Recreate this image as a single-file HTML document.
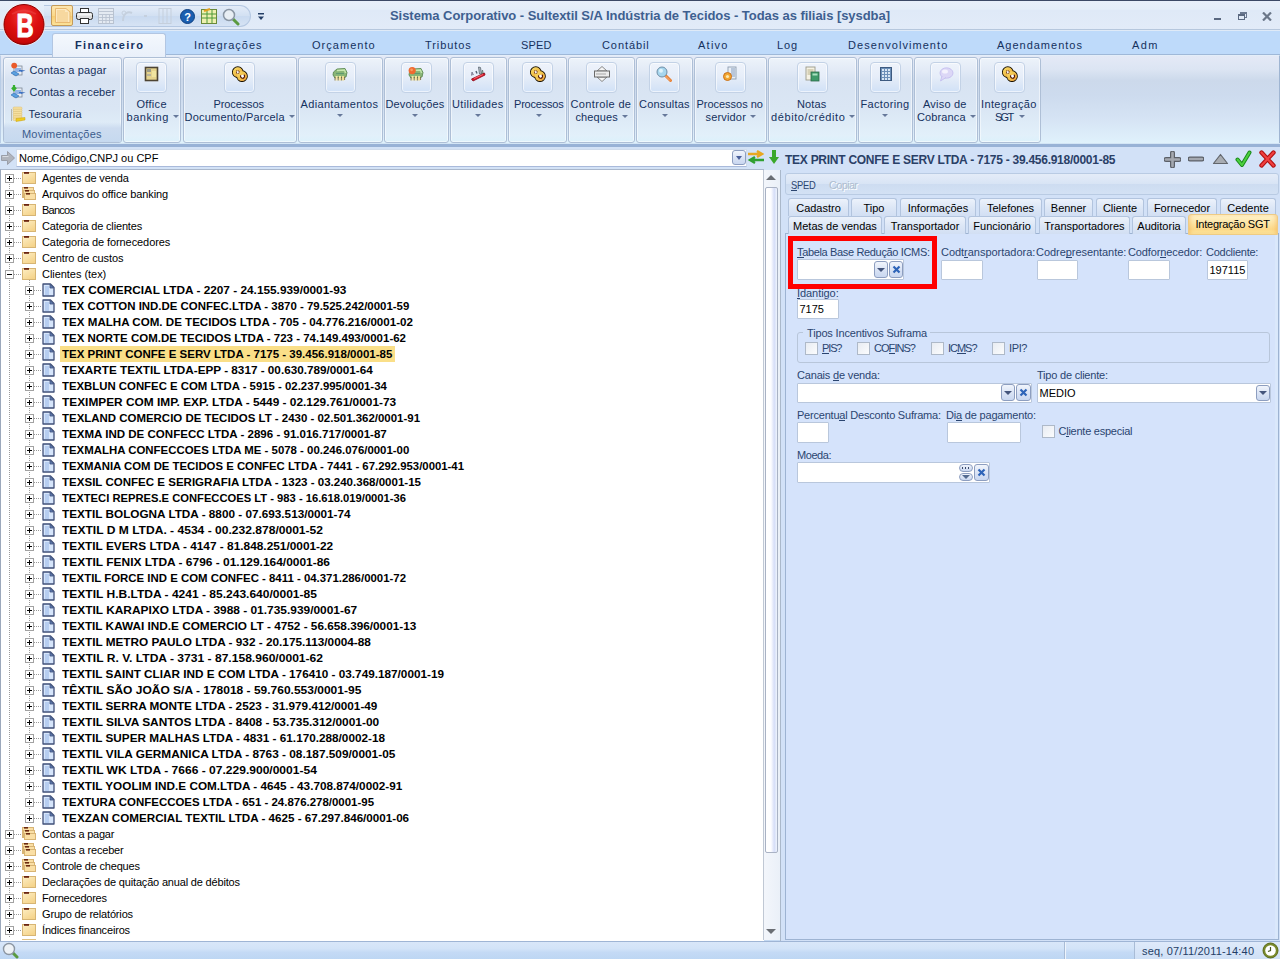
<!DOCTYPE html><html><head><meta charset="utf-8"><style>
*{box-sizing:border-box}
body{margin:0;width:1280px;height:959px;position:relative;overflow:hidden;font-family:"Liberation Sans",sans-serif;background:#c5daf3;font-size:11px;color:#000}
.a{position:absolute}
.t{position:absolute;white-space:nowrap;line-height:1}
.dv{position:absolute;width:1px;background-image:linear-gradient(#9a9a9a 50%,transparent 50%);background-size:1px 2px}
.dh{position:absolute;height:1px;background-image:linear-gradient(90deg,#9a9a9a 50%,transparent 50%);background-size:2px 1px}
.grp{position:absolute;top:57px;height:86px;border:1px solid #aebfd6;border-radius:3px;background:linear-gradient(#edf3fa 0%,#e2eaf6 15%,#d8e3f2 25%,#dae6f4 60%,#e2f0fa 92%,#dcf1fb 100%);box-shadow:inset 0 0 0 1px rgba(255,255,255,.5)}
.ib{position:absolute;top:62px;width:31px;height:31px;border:1px solid #c3d2e6;border-radius:4px;background:linear-gradient(#eef3fb 0%,#e7eef9 45%,#dde8f7 70%,#d0e1f7 100%);box-shadow:inset 0 0 0 1px rgba(255,255,255,.6)}
.rl{position:absolute;white-space:nowrap;line-height:1;color:#15315e;font-size:11px}
.arr{position:absolute;width:0;height:0;border-left:3px solid transparent;border-right:3px solid transparent;border-top:3px solid #66789a}
.lbl{position:absolute;white-space:nowrap;line-height:1;color:#2b4570;font-size:11px}
.inp{position:absolute;background:#fff;border:1px solid #b9c7dc;border-radius:1px}
.btn{position:absolute;border:1px solid #8d9ec0;border-radius:3px;background:linear-gradient(#f1f5fc,#dbe4f5 50%,#c9d7f0)}
.tab{position:absolute;height:18px;border:1px solid #b2c4de;border-bottom:none;border-radius:3px 3px 0 0;background:linear-gradient(#ecf2fb,#dde7f6 50%,#d2dff3)}
.cb{position:absolute;width:13px;height:13px;border:1px solid #aeb9c8;background:linear-gradient(135deg,#e8ecf2,#fbfcfd)}
</style></head><body>
<div class="a" style="left:0;top:0;width:1280px;height:30px;background:linear-gradient(#e8f0fa 0%,#e4eef9 30%,#dfe9f7 32%,#e2ebf8 100%);border-top:1px solid #3c4a66;border-bottom:1px solid #b6c7dd"></div>
<div class="t" style="left:390px;top:9px;font-weight:bold;font-size:13px;color:#3e5f90;letter-spacing:-0.048px">Sistema Corporativo - Sultextil S/A Indústria de Tecidos - Todas as filiais [sysdba]</div>
<div class="a" style="left:1214px;top:18px;width:7px;height:2px;background:#5a6880"></div>
<div class="a" style="left:1240px;top:12px;width:7px;height:6px;border:1px solid #6a7890;border-top-width:2px"></div>
<div class="a" style="left:1238px;top:14px;width:7px;height:6px;border:1px solid #5a6880;border-top-width:2px;background:#e0eaf7"></div>
<svg class="a" style="left:1262px;top:12px" width="10" height="9" viewBox="0 0 10 9"><path d="M1 0.5 L9 8.5 M9 0.5 L1 8.5" stroke="#6a7688" stroke-width="2.2"/></svg>
<div class="a" style="left:0;top:30px;width:1280px;height:25px;background:#bedafa;border-top:1px solid #dfeaf7;border-bottom:1px solid #9fb8d8"></div>
<div class="a" style="left:0;top:55px;width:1280px;height:89px;background:linear-gradient(#e4e9f6 0%,#dce5f3 15%,#ccd9eb 28%,#cddbee 45%,#d5e3f4 70%,#dcecf9 88%,#e0f2fc 100%);border-top:1px solid #e4eef9;border-left:1px solid #b9cde6;border-right:1px solid #9fb5d2"></div>
<div class="a" style="left:52px;top:33px;width:114px;height:24px;border:1px solid #b2c6e2;border-bottom:none;border-radius:3px 3px 0 0;background:linear-gradient(#f4f8fd,#e9f0fa)"></div>
<div class="t" style="left:75px;top:40px;font-weight:bold;font-size:11px;color:#15315e;letter-spacing:1.375px">Financeiro</div>
<div class="t" style="left:194px;top:40px;font-size:11px;color:#15315e;letter-spacing:1.012px">Integrações</div>
<div class="t" style="left:312px;top:40px;font-size:11px;color:#15315e;letter-spacing:1.035px">Orçamento</div>
<div class="t" style="left:425px;top:40px;font-size:11px;color:#15315e;letter-spacing:0.925px">Tributos</div>
<div class="t" style="left:521px;top:40px;font-size:11px;color:#15315e;letter-spacing:0.177px">SPED</div>
<div class="t" style="left:602px;top:40px;font-size:11px;color:#15315e;letter-spacing:0.913px">Contábil</div>
<div class="t" style="left:698px;top:40px;font-size:11px;color:#15315e;letter-spacing:1.245px">Ativo</div>
<div class="t" style="left:777px;top:40px;font-size:11px;color:#15315e;letter-spacing:0.820px">Log</div>
<div class="t" style="left:848px;top:40px;font-size:11px;color:#15315e;letter-spacing:1.066px">Desenvolvimento</div>
<div class="t" style="left:997px;top:40px;font-size:11px;color:#15315e;letter-spacing:0.991px">Agendamentos</div>
<div class="t" style="left:1132px;top:40px;font-size:11px;color:#15315e;letter-spacing:1.438px">Adm</div>
<div class="grp" style="left:3px;width:119px"></div>
<div class="a" style="left:4px;top:122px;width:117px;height:20px;background:linear-gradient(rgba(205,221,241,0) 0%,#cddcf0 30%,#c6d9ef 100%);border-radius:0 0 2px 2px"></div>
<svg class="a" style="left:10px;top:62px" width="16" height="16" viewBox="0 0 16 16"><rect x="4" y="4" width="8" height="9" fill="#e8edf4" stroke="#7d8896" stroke-width="0.8"/><path d="M5 7h6M5 9h6" stroke="#3f7fd8" stroke-width="1.2"/><path d="M1 11 L6 14 L9 12 L4 9 Z" fill="#5aa0e0" stroke="#2d6ab0" stroke-width="0.6"/><path d="M11 8 L15.5 8.5 L11 10" fill="#3a6fc0"/><rect x="9" y="8" width="3" height="1.2" fill="#3a6fc0"/><circle cx="4.2" cy="3.6" r="2.9" fill="#ea5a2a"/></svg>
<svg class="a" style="left:10px;top:84px" width="16" height="16" viewBox="0 0 16 16"><rect x="4" y="4" width="8" height="9" fill="#e8edf4" stroke="#7d8896" stroke-width="0.8"/><path d="M5 7h6M5 9h6" stroke="#3f7fd8" stroke-width="1.2"/><path d="M1 11 L6 14 L9 12 L4 9 Z" fill="#5aa0e0" stroke="#2d6ab0" stroke-width="0.6"/><path d="M11 8 L15.5 8.5 L11 10" fill="#3a6fc0"/><rect x="9" y="8" width="3" height="1.2" fill="#3a6fc0"/><path d="M4 1 V5 M2 3.5 L4 6 L6 3.5" stroke="#36b030" stroke-width="2.2" fill="none"/></svg>
<svg class="a" style="left:10px;top:106px" width="16" height="16" viewBox="0 0 16 16"><path d="M1.5 3 V15" stroke="#8a8060" stroke-width="0.8" opacity="0.6"/><rect x="3" y="1.0" width="9" height="2.6" rx="1.2" fill="#f7e0a0" stroke="#d9bd70" stroke-width="0.5"/><rect x="3" y="3.2" width="9" height="2.6" rx="1.2" fill="#f7e0a0" stroke="#d9bd70" stroke-width="0.5"/><rect x="3" y="5.4" width="9" height="2.6" rx="1.2" fill="#f7e0a0" stroke="#d9bd70" stroke-width="0.5"/><rect x="3" y="7.6000000000000005" width="9" height="2.6" rx="1.2" fill="#f7e0a0" stroke="#d9bd70" stroke-width="0.5"/><rect x="3" y="9.8" width="9" height="2.6" rx="1.2" fill="#f7e0a0" stroke="#d9bd70" stroke-width="0.5"/><rect x="3" y="12.0" width="9" height="2.6" rx="1.2" fill="#f7e0a0" stroke="#d9bd70" stroke-width="0.5"/><path d="M6 12.5 L15 11.5 L15 14 L6 15.5 Z" fill="#f0cc20" stroke="#c8a010" stroke-width="0.5"/></svg>
<div class="t" style="left:29.5px;top:65px;font-size:11px;color:#15315e;letter-spacing:0.137px">Contas a pagar</div>
<div class="t" style="left:29.5px;top:87px;font-size:11px;color:#15315e;letter-spacing:0.087px">Contas a receber</div>
<div class="t" style="left:28.5px;top:109px;font-size:11px;color:#15315e;letter-spacing:0.182px">Tesouraria</div>
<div class="t" style="left:22px;top:129px;font-size:11px;color:#3b5b8c;letter-spacing:0.204px">Movimentações</div>
<div class="grp" style="left:123px;width:58px"></div>
<div class="ib" style="left:136px"></div>
<svg class="a" style="left:144px;top:66px" width="16" height="16" viewBox="0 0 16 16"><rect x="1.5" y="1.5" width="12" height="13" fill="#e5d38d" stroke="#4d4434" stroke-width="1.6"/><rect x="3" y="3" width="4" height="3" fill="#9a9a88"/><rect x="3" y="8" width="4" height="2" fill="#b9b39a"/><rect x="8" y="5" width="4" height="6" fill="#f0e4a0"/></svg>
<div class="t" style="left:136.5px;top:99px;font-size:11px;color:#15315e;letter-spacing:0.294px">Office</div>
<div class="t" style="left:126.5px;top:112px;font-size:11px;color:#15315e;letter-spacing:0.542px">banking</div>
<div class="arr" style="left:172.8px;top:115px"></div>
<div class="grp" style="left:183px;width:114px"></div>
<div class="ib" style="left:224px"></div>
<svg class="a" style="left:232px;top:66px" width="16" height="16" viewBox="0 0 16 16"><defs><linearGradient id="gg" x1="0" y1="0" x2="1" y2="1"><stop offset="0" stop-color="#f8e070"/><stop offset="0.5" stop-color="#f2c048"/><stop offset="1" stop-color="#ee9a3a"/></linearGradient></defs><g stroke="#1a1200" stroke-width="1.5"><circle cx="5.8" cy="6.2" r="5.1" fill="none"/><circle cx="10" cy="10.2" r="5.1" fill="none"/></g><circle cx="5.8" cy="6.2" r="4.9" fill="url(#gg)"/><circle cx="10" cy="10.2" r="4.9" fill="url(#gg)"/><rect x="4.5" y="4.8" width="2.6" height="2.6" fill="#fff" stroke="#5a1a00" stroke-width="0.9" stroke-dasharray="0.8 0.6"/><path d="M8.8 9.2 a2 2 0 1 0 3 -0.6" fill="#fff" stroke="#4a1000" stroke-width="1.1"/></svg>
<div class="t" style="left:213.5px;top:99px;font-size:11px;color:#15315e;letter-spacing:-0.107px">Processos</div>
<div class="t" style="left:184.5px;top:112px;font-size:11px;color:#15315e;letter-spacing:0.212px">Documento/Parcela</div>
<div class="arr" style="left:289.0px;top:115px"></div>
<div class="grp" style="left:298px;width:85px"></div>
<div class="ib" style="left:325px"></div>
<svg class="a" style="left:332px;top:66px" width="16" height="16" viewBox="0 0 16 16"><path d="M1.5 6 L5 3 L13 2.5 L15 6.5 L14 11 L3 12 L1 9 Z" fill="#8ab677" stroke="#5d8a55" stroke-width="0.9" stroke-linejoin="round"/><path d="M5 4.5 L12.5 4 L13.5 7" fill="none" stroke="#c8e8b0" stroke-width="1.3"/><path d="M4 7.5 h8" stroke="#5f9a70" stroke-width="1.2"/><rect x="3.5" y="10" width="2.2" height="4.5" fill="#f4e6a8"/><rect x="6.8" y="10" width="2.2" height="4.5" fill="#f8e8a0"/><rect x="10" y="10" width="2.2" height="4.5" fill="#eedc98"/><path d="M3 11 v3.5 M6.2 11 v3.5 M9.4 11 v3.5 M12.6 11 v3" stroke="#6a5a30" stroke-width="0.8"/></svg>
<div class="t" style="left:300.5px;top:99px;font-size:11px;color:#15315e;letter-spacing:0.342px">Adiantamentos</div>
<div class="arr" style="left:336.8px;top:114px"></div>
<div class="grp" style="left:384px;width:65px"></div>
<div class="ib" style="left:401px"></div>
<svg class="a" style="left:408px;top:66px" width="16" height="16" viewBox="0 0 16 16"><path d="M1.5 6 L5 3 L13 2.5 L15 6.5 L14 11 L3 12 L1 9 Z" fill="#8ab677" stroke="#5d8a55" stroke-width="0.9" stroke-linejoin="round"/><path d="M5 4.5 L12.5 4 L13.5 7" fill="none" stroke="#c8e8b0" stroke-width="1.3"/><path d="M4 7.5 h8" stroke="#5f9a70" stroke-width="1.2"/><rect x="3.5" y="10" width="2.2" height="4.5" fill="#f4e6a8"/><rect x="6.8" y="10" width="2.2" height="4.5" fill="#f8e8a0"/><rect x="10" y="10" width="2.2" height="4.5" fill="#eedc98"/><path d="M3 11 v3.5 M6.2 11 v3.5 M9.4 11 v3.5 M12.6 11 v3" stroke="#6a5a30" stroke-width="0.8"/><circle cx="4.2" cy="4.6" r="3.6" fill="#f06a30"/><circle cx="3.6" cy="3.8" r="1.4" fill="#f89a60"/></svg>
<div class="t" style="left:385.5px;top:99px;font-size:11px;color:#15315e;letter-spacing:0.141px">Devoluções</div>
<div class="arr" style="left:412.4px;top:114px"></div>
<div class="grp" style="left:450px;width:57px"></div>
<div class="ib" style="left:463px"></div>
<svg class="a" style="left:470px;top:66px" width="16" height="16" viewBox="0 0 16 16"><path d="M9.5 8 L8.5 1 L10.5 1.5 L11.5 8 Z" fill="#b8c0c8" stroke="#58646e" stroke-width="0.8"/><path d="M11.5 8 L12.5 4 L13.5 8 Z" fill="#9fb8a8" stroke="#58706a" stroke-width="0.7"/><path d="M1.5 9.5 L2 6 L3.5 9" fill="#a8a8b8" stroke="#707088" stroke-width="0.8"/><path d="M7 7.5 L6 5" stroke="#506070" stroke-width="1.4"/><path d="M1.5 13 L14.5 7 L15 9 L3 15 Z" fill="#e01828" stroke="#8a0818" stroke-width="0.8" stroke-linejoin="round"/><path d="M4 12.5 L13 8.5" stroke="#ff7a80" stroke-width="0.8"/></svg>
<div class="t" style="left:452.0px;top:99px;font-size:11px;color:#15315e;letter-spacing:0.326px">Utilidades</div>
<div class="arr" style="left:474.9px;top:114px"></div>
<div class="grp" style="left:508px;width:59px"></div>
<div class="ib" style="left:522px"></div>
<svg class="a" style="left:530px;top:66px" width="16" height="16" viewBox="0 0 16 16"><defs><linearGradient id="gg" x1="0" y1="0" x2="1" y2="1"><stop offset="0" stop-color="#f8e070"/><stop offset="0.5" stop-color="#f2c048"/><stop offset="1" stop-color="#ee9a3a"/></linearGradient></defs><g stroke="#1a1200" stroke-width="1.5"><circle cx="5.8" cy="6.2" r="5.1" fill="none"/><circle cx="10" cy="10.2" r="5.1" fill="none"/></g><circle cx="5.8" cy="6.2" r="4.9" fill="url(#gg)"/><circle cx="10" cy="10.2" r="4.9" fill="url(#gg)"/><rect x="4.5" y="4.8" width="2.6" height="2.6" fill="#fff" stroke="#5a1a00" stroke-width="0.9" stroke-dasharray="0.8 0.6"/><path d="M8.8 9.2 a2 2 0 1 0 3 -0.6" fill="#fff" stroke="#4a1000" stroke-width="1.1"/></svg>
<div class="t" style="left:514.0px;top:99px;font-size:11px;color:#15315e;letter-spacing:-0.201px">Processos</div>
<div class="arr" style="left:536.1px;top:114px"></div>
<div class="grp" style="left:568px;width:67px"></div>
<div class="ib" style="left:586px"></div>
<svg class="a" style="left:594px;top:66px" width="16" height="16" viewBox="0 0 16 16"><path d="M8 0.5 L13 5 H3 Z" fill="#f4f4f4" stroke="#7c7c7c" stroke-width="0.9"/><path d="M8 15.5 L13 11 H3 Z" fill="#f4f4f4" stroke="#7c7c7c" stroke-width="0.9"/><rect x="0.5" y="5" width="15" height="6" fill="#ececec" stroke="#6a6a6a" stroke-width="1"/><path d="M2 8h10" stroke="#a8a8a8" stroke-width="1"/></svg>
<div class="t" style="left:570.5px;top:99px;font-size:11px;color:#15315e;letter-spacing:0.362px">Controle de</div>
<div class="t" style="left:575.5px;top:112px;font-size:11px;color:#15315e;letter-spacing:0.109px">cheques</div>
<div class="arr" style="left:622.0px;top:115px"></div>
<div class="grp" style="left:636px;width:57px"></div>
<div class="ib" style="left:649px"></div>
<svg class="a" style="left:656px;top:66px" width="16" height="16" viewBox="0 0 16 16"><path d="M9 9 L14.5 14.5" stroke="#e8843a" stroke-width="3" stroke-linecap="round"/><path d="M9.5 10 L14 14.5" stroke="#f7b27a" stroke-width="1"/><circle cx="6" cy="6" r="5" fill="#a7d6ee" stroke="#6f8ea6" stroke-width="1"/><circle cx="5" cy="4.8" r="2" fill="#dff3fb"/></svg>
<div class="t" style="left:639.0px;top:99px;font-size:11px;color:#15315e;letter-spacing:0.197px">Consultas</div>
<div class="arr" style="left:661.5px;top:114px"></div>
<div class="grp" style="left:694px;width:73px"></div>
<div class="ib" style="left:715px"></div>
<svg class="a" style="left:722px;top:66px" width="16" height="16" viewBox="0 0 16 16"><rect x="6" y="1" width="8" height="12" fill="#e8eef6" stroke="#8e9db0" stroke-width="0.9"/><rect x="9" y="2" width="4" height="9" fill="#b8c6da"/><circle cx="5.5" cy="10.5" r="4" fill="#f2a630" stroke="#c9701a" stroke-width="1"/><circle cx="5.5" cy="10.5" r="1.6" fill="#fde9b0"/></svg>
<div class="t" style="left:696.5px;top:99px;font-size:11px;color:#15315e;letter-spacing:-0.023px">Processos no</div>
<div class="t" style="left:705.5px;top:112px;font-size:11px;color:#15315e;letter-spacing:0.168px">servidor</div>
<div class="arr" style="left:750.4px;top:115px"></div>
<div class="grp" style="left:768px;width:89px"></div>
<div class="ib" style="left:797px"></div>
<svg class="a" style="left:804px;top:66px" width="16" height="16" viewBox="0 0 16 16"><rect x="2" y="1" width="9" height="13" fill="#f6f2e4" stroke="#9a9a8a" stroke-width="0.9"/><path d="M3.5 4h6M3.5 6h6M3.5 8h4" stroke="#b0a880" stroke-width="0.9"/><rect x="7" y="6" width="8" height="9" fill="#3f9a6a" stroke="#2f6a4a" stroke-width="0.8"/><rect x="8.5" y="7.5" width="5" height="2" fill="#a9e0c0"/></svg>
<div class="t" style="left:797.0px;top:99px;font-size:11px;color:#15315e;letter-spacing:0.113px">Notas</div>
<div class="t" style="left:771.0px;top:112px;font-size:11px;color:#15315e;letter-spacing:0.604px">débito/crédito</div>
<div class="arr" style="left:849.3px;top:115px"></div>
<div class="grp" style="left:858px;width:55px"></div>
<div class="ib" style="left:870px"></div>
<svg class="a" style="left:878px;top:66px" width="16" height="16" viewBox="0 0 16 16"><rect x="2.5" y="1.5" width="11" height="13" fill="#6c8fb8" stroke="#3d5a80" stroke-width="1"/><rect x="4" y="3" width="2" height="2" fill="#d8e6f4"/><rect x="7" y="3" width="2" height="2" fill="#d8e6f4"/><rect x="10" y="3" width="2" height="2" fill="#d8e6f4"/><rect x="4" y="6" width="2" height="2" fill="#d8e6f4"/><rect x="7" y="6" width="2" height="2" fill="#d8e6f4"/><rect x="10" y="6" width="2" height="2" fill="#d8e6f4"/><rect x="4" y="9" width="2" height="2" fill="#d8e6f4"/><rect x="7" y="9" width="2" height="2" fill="#d8e6f4"/><rect x="10" y="9" width="2" height="2" fill="#d8e6f4"/><rect x="4" y="12" width="2" height="2" fill="#d8e6f4"/><rect x="7" y="12" width="2" height="2" fill="#d8e6f4"/><rect x="10" y="12" width="2" height="2" fill="#d8e6f4"/></svg>
<div class="t" style="left:860.5px;top:99px;font-size:11px;color:#15315e;letter-spacing:0.343px">Factoring</div>
<div class="arr" style="left:882.2px;top:114px"></div>
<div class="grp" style="left:914px;width:64px"></div>
<div class="ib" style="left:930px"></div>
<svg class="a" style="left:938px;top:66px" width="16" height="16" viewBox="0 0 16 16"><ellipse cx="8.5" cy="7" rx="6.5" ry="5.2" fill="#dcd7f6" stroke="#c2bbee" stroke-width="0.8"/><path d="M4 10 L2.5 15 L8 11.5" fill="#dcd7f6" stroke="#c2bbee" stroke-width="0.8"/><ellipse cx="7" cy="5.5" rx="3" ry="2" fill="#f4f2fd"/></svg>
<div class="t" style="left:923.0px;top:99px;font-size:11px;color:#15315e;letter-spacing:0.214px">Aviso de</div>
<div class="t" style="left:917.0px;top:112px;font-size:11px;color:#15315e;letter-spacing:0.128px">Cobranca</div>
<div class="arr" style="left:970.1px;top:115px"></div>
<div class="grp" style="left:979px;width:62px"></div>
<div class="ib" style="left:994px"></div>
<svg class="a" style="left:1002px;top:66px" width="16" height="16" viewBox="0 0 16 16"><defs><linearGradient id="gg" x1="0" y1="0" x2="1" y2="1"><stop offset="0" stop-color="#f8e070"/><stop offset="0.5" stop-color="#f2c048"/><stop offset="1" stop-color="#ee9a3a"/></linearGradient></defs><g stroke="#1a1200" stroke-width="1.5"><circle cx="5.8" cy="6.2" r="5.1" fill="none"/><circle cx="10" cy="10.2" r="5.1" fill="none"/></g><circle cx="5.8" cy="6.2" r="4.9" fill="url(#gg)"/><circle cx="10" cy="10.2" r="4.9" fill="url(#gg)"/><rect x="4.5" y="4.8" width="2.6" height="2.6" fill="#fff" stroke="#5a1a00" stroke-width="0.9" stroke-dasharray="0.8 0.6"/><path d="M8.8 9.2 a2 2 0 1 0 3 -0.6" fill="#fff" stroke="#4a1000" stroke-width="1.1"/></svg>
<div class="t" style="left:981.0px;top:99px;font-size:11px;color:#15315e;letter-spacing:0.380px">Integração</div>
<div class="t" style="left:995.0px;top:112px;font-size:11px;color:#15315e;letter-spacing:-1.712px">SGT</div>
<div class="arr" style="left:1018.5px;top:115px"></div>
<div class="a" style="left:44px;top:5px;width:207px;height:22px;border:1px solid #b5c8e2;border-left:none;border-radius:0 11px 11px 0;background:linear-gradient(#e3ecf8,#d2e0f2 50%,#c9daf0 51%,#d6e3f4)"></div>
<div class="a" style="left:51px;top:5px;width:22px;height:21px;border:1px solid #c49a58;border-radius:2px;background:linear-gradient(#fde6b0,#fbd98a 50%,#f9cd70 51%,#fbe29a)"></div>
<svg class="a" style="left:55px;top:8px" width="16" height="15"><path d="M0.5 0.5 H11 L15 4 V14.5 H0.5 Z" fill="#fce8c0" stroke="#e8b870" stroke-width="1"/><path d="M2 3h8M2 5h11M2 7h11M2 9h11M2 11h11M2 13h11" stroke="#f0c070" stroke-width="0.8"/></svg>
<svg class="a" style="left:76px;top:8px" width="17" height="16"><rect x="4.5" y="0.5" width="8" height="5" fill="#fff" stroke="#333" stroke-width="1"/><rect x="0.5" y="4.5" width="16" height="7" rx="2" fill="#dcdcdc" stroke="#2f2f2f" stroke-width="1"/><rect x="1.5" y="5.5" width="14" height="2" fill="#f4f4f4"/><rect x="4.5" y="10.5" width="8" height="5" fill="#fff" stroke="#333" stroke-width="1"/></svg>
<svg class="a" style="left:98px;top:8px" width="16" height="16"><rect x="0.5" y="0.5" width="15" height="15" fill="#e4eaf2" stroke="#b8c2d0"/><path d="M1 3.5h14M1 6.5h14M4.5 7v8M8 7v8M11.5 7v8M1 9.5h14M1 12.5h14" stroke="#b8c2d0" stroke-width="0.9"/></svg>
<svg class="a" style="left:120px;top:9px" width="32" height="14"><path d="M3 12 C3 4 8 2 12 4" stroke="#c5d0de" stroke-width="2" fill="none"/><circle cx="4" cy="4" r="2" fill="none" stroke="#c5d0de"/><path d="M24 7h3" stroke="#c5d0de" stroke-width="2"/></svg>
<svg class="a" style="left:158px;top:8px" width="14" height="16"><rect x="1" y="0.5" width="12" height="15" fill="none" stroke="#c5cfdc"/><path d="M5 1v14M9 1v14" stroke="#c5cfdc"/></svg>
<svg class="a" style="left:180px;top:9px" width="15" height="15"><circle cx="7.5" cy="7.5" r="7" fill="#1a5eb0" stroke="#0e3f80"/><text x="7.5" y="11.5" text-anchor="middle" font-family="Liberation Sans" font-weight="bold" font-size="11" fill="#fff">?</text></svg>
<svg class="a" style="left:201px;top:8px" width="16" height="16"><rect x="0.5" y="1.5" width="15" height="14" fill="#eef0b0" stroke="#6a8a3a"/><path d="M1 6h14M1 10h14M6 2v13M11 2v13" stroke="#4c9a3a"/><path d="M3 3 L9 1" stroke="#e0a020" stroke-width="2"/></svg>
<svg class="a" style="left:222px;top:8px" width="18" height="18"><path d="M10 10 L16 16" stroke="#5a9a40" stroke-width="3" stroke-linecap="round"/><circle cx="7" cy="7" r="5.5" fill="#e8eef4" stroke="#8a96a4" stroke-width="1.5"/></svg>
<svg class="a" style="left:258px;top:13px" width="7" height="8"><rect x="0" y="0" width="6" height="1.5" fill="#243e66"/><path d="M0 3.5 H6 L3 7 Z" fill="#243e66"/></svg>
<svg class="a" style="left:2px;top:2px" width="45" height="45" viewBox="0 0 45 45"><defs><radialGradient id="lg" cx="0.5" cy="0.3" r="0.75"><stop offset="0" stop-color="#f03838"/><stop offset="0.5" stop-color="#dc1010"/><stop offset="0.85" stop-color="#c80808"/><stop offset="1" stop-color="#a00000"/></radialGradient></defs><circle cx="22" cy="22.5" r="21.3" fill="#fbeaea" opacity="0.7"/><circle cx="22" cy="22.5" r="20" fill="url(#lg)" stroke="#8a0000" stroke-width="1"/><path d="M10 12 Q22 5 34 12" stroke="#f87070" stroke-width="2" fill="none" opacity="0.25"/><text x="0" y="0" transform="translate(23,34.8) scale(0.72,1)" text-anchor="middle" font-family="Liberation Sans" font-weight="bold" font-size="33" fill="#fff" stroke="#fff" stroke-width="1.1">B</text></svg>
<div class="a" style="left:0;top:143px;width:1280px;height:1px;background:#d3e5f5"></div>
<div class="a" style="left:0;top:144px;width:1280px;height:3px;background:#98b2d6"></div>
<div class="a" style="left:0;top:147px;width:784px;height:23px;background:#d3e2f6"></div>
<svg class="a" style="left:1px;top:151px" width="14" height="14"><path d="M0.5 4.5 H6.5 V0.5 L13.5 7 L6.5 13.5 V9.5 H0.5 Z" fill="#b0b4bc" stroke="#9a9ea8"/><path d="M1.5 5.5 H7.5" stroke="#d8dce2"/></svg>
<div class="a" style="left:16px;top:149px;width:731px;height:18px;background:#fff;border:1px solid #d0dcec;border-bottom-color:#a9badb"></div>
<div class="t" style="left:19px;top:153px;font-size:11px">Nome,Código,CNPJ ou CPF</div>
<div class="btn" style="left:732px;top:150px;width:14px;height:15px"></div>
<div class="arr" style="left:736px;top:156px;border-top-color:#4a5f9a;border-left-width:3.5px;border-right-width:3.5px;border-top-width:4px"></div>
<svg class="a" style="left:747px;top:149px" width="18" height="16"><path d="M1 5 H13 M10 2 L15 5 L10 8" stroke="#e8a820" stroke-width="2.4" fill="none"/><path d="M17 11 H5 M8 8 L3 11 L8 14" stroke="#30a030" stroke-width="2.4" fill="none"/></svg>
<svg class="a" style="left:768px;top:149px" width="12" height="17"><path d="M6 1 V10" stroke="#3aa82a" stroke-width="4"/><path d="M1 8 L6 15 L11 8 Z" fill="#3aa82a"/></svg>
<div class="a" style="left:0;top:169px;width:764px;height:772px;background:#fff;border-left:1px solid #9ba8bb;border-top:1px solid #aab8cc"></div>
<div class="dv" style="left:9px;top:182px;height:756px"></div>
<div class="a" style="left:22px;top:939px;width:14px;height:1px;background:#e0c080"></div>
<div class="dv" style="left:29px;top:280px;height:534px"></div>
<div class="dh" style="left:14px;top:178px;width:7px"></div>
<svg class="a" style="left:5px;top:174px" width="9" height="9" viewBox="0 0 9 9"><rect x="0.5" y="0.5" width="8" height="8" fill="#fff" stroke="#a2a2a2"/><rect x="2" y="4" width="5" height="1" fill="#000"/><rect x="4" y="2" width="1" height="5" fill="#000"/></svg>
<svg class="a" style="left:22px;top:171px" width="14" height="13" viewBox="0 0 14 13"><defs><linearGradient id="fg" x1="0" y1="0" x2="0.6" y2="1"><stop offset="0" stop-color="#fdeec4"/><stop offset="1" stop-color="#f5d48c"/></linearGradient></defs><rect x="0.5" y="1.5" width="13" height="11" fill="url(#fg)" stroke="#d7b574"/><rect x="2" y="1" width="5" height="1.8" fill="#6a2410"/></svg>
<div class="t" style="left:42px;top:173px;font-size:11px;letter-spacing:-0.129px">Agentes de venda</div>
<div class="dh" style="left:14px;top:194px;width:7px"></div>
<svg class="a" style="left:5px;top:190px" width="9" height="9" viewBox="0 0 9 9"><rect x="0.5" y="0.5" width="8" height="8" fill="#fff" stroke="#a2a2a2"/><rect x="2" y="4" width="5" height="1" fill="#000"/><rect x="4" y="2" width="1" height="5" fill="#000"/></svg>
<svg class="a" style="left:22px;top:186px" width="14" height="14" viewBox="0 0 14 14"><rect x="0.5" y="1.5" width="11" height="10" fill="#fadfa5" stroke="#d8b474" stroke-width="1"/><rect x="2" y="1" width="4" height="1.6" fill="#6a2810"/><rect x="1.5" y="4.5" width="11" height="7" fill="#fadfa5" stroke="#d8b474" stroke-width="1"/><rect x="3" y="4" width="4" height="1.6" fill="#6a2810"/><rect x="2.5" y="7.5" width="11" height="6" fill="#fadfa5" stroke="#d8b474" stroke-width="1"/><rect x="4" y="7" width="4" height="1.6" fill="#6a2810"/></svg>
<div class="t" style="left:42px;top:189px;font-size:11px;letter-spacing:-0.109px">Arquivos do office banking</div>
<div class="dh" style="left:14px;top:210px;width:7px"></div>
<svg class="a" style="left:5px;top:206px" width="9" height="9" viewBox="0 0 9 9"><rect x="0.5" y="0.5" width="8" height="8" fill="#fff" stroke="#a2a2a2"/><rect x="2" y="4" width="5" height="1" fill="#000"/><rect x="4" y="2" width="1" height="5" fill="#000"/></svg>
<svg class="a" style="left:22px;top:203px" width="14" height="13" viewBox="0 0 14 13"><defs><linearGradient id="fg" x1="0" y1="0" x2="0.6" y2="1"><stop offset="0" stop-color="#fdeec4"/><stop offset="1" stop-color="#f5d48c"/></linearGradient></defs><rect x="0.5" y="1.5" width="13" height="11" fill="url(#fg)" stroke="#d7b574"/><rect x="2" y="1" width="5" height="1.8" fill="#6a2410"/></svg>
<div class="t" style="left:42px;top:205px;font-size:11px;letter-spacing:-0.741px">Bancos</div>
<div class="dh" style="left:14px;top:226px;width:7px"></div>
<svg class="a" style="left:5px;top:222px" width="9" height="9" viewBox="0 0 9 9"><rect x="0.5" y="0.5" width="8" height="8" fill="#fff" stroke="#a2a2a2"/><rect x="2" y="4" width="5" height="1" fill="#000"/><rect x="4" y="2" width="1" height="5" fill="#000"/></svg>
<svg class="a" style="left:22px;top:219px" width="14" height="13" viewBox="0 0 14 13"><defs><linearGradient id="fg" x1="0" y1="0" x2="0.6" y2="1"><stop offset="0" stop-color="#fdeec4"/><stop offset="1" stop-color="#f5d48c"/></linearGradient></defs><rect x="0.5" y="1.5" width="13" height="11" fill="url(#fg)" stroke="#d7b574"/><rect x="2" y="1" width="5" height="1.8" fill="#6a2410"/></svg>
<div class="t" style="left:42px;top:221px;font-size:11px;letter-spacing:-0.157px">Categoria de clientes</div>
<div class="dh" style="left:14px;top:242px;width:7px"></div>
<svg class="a" style="left:5px;top:238px" width="9" height="9" viewBox="0 0 9 9"><rect x="0.5" y="0.5" width="8" height="8" fill="#fff" stroke="#a2a2a2"/><rect x="2" y="4" width="5" height="1" fill="#000"/><rect x="4" y="2" width="1" height="5" fill="#000"/></svg>
<svg class="a" style="left:22px;top:235px" width="14" height="13" viewBox="0 0 14 13"><defs><linearGradient id="fg" x1="0" y1="0" x2="0.6" y2="1"><stop offset="0" stop-color="#fdeec4"/><stop offset="1" stop-color="#f5d48c"/></linearGradient></defs><rect x="0.5" y="1.5" width="13" height="11" fill="url(#fg)" stroke="#d7b574"/><rect x="2" y="1" width="5" height="1.8" fill="#6a2410"/></svg>
<div class="t" style="left:42px;top:237px;font-size:11px;letter-spacing:-0.081px">Categoria de fornecedores</div>
<div class="dh" style="left:14px;top:258px;width:7px"></div>
<svg class="a" style="left:5px;top:254px" width="9" height="9" viewBox="0 0 9 9"><rect x="0.5" y="0.5" width="8" height="8" fill="#fff" stroke="#a2a2a2"/><rect x="2" y="4" width="5" height="1" fill="#000"/><rect x="4" y="2" width="1" height="5" fill="#000"/></svg>
<svg class="a" style="left:22px;top:251px" width="14" height="13" viewBox="0 0 14 13"><defs><linearGradient id="fg" x1="0" y1="0" x2="0.6" y2="1"><stop offset="0" stop-color="#fdeec4"/><stop offset="1" stop-color="#f5d48c"/></linearGradient></defs><rect x="0.5" y="1.5" width="13" height="11" fill="url(#fg)" stroke="#d7b574"/><rect x="2" y="1" width="5" height="1.8" fill="#6a2410"/></svg>
<div class="t" style="left:42px;top:253px;font-size:11px;letter-spacing:-0.117px">Centro de custos</div>
<div class="dh" style="left:14px;top:274px;width:7px"></div>
<svg class="a" style="left:5px;top:270px" width="9" height="9" viewBox="0 0 9 9"><rect x="0.5" y="0.5" width="8" height="8" fill="#fff" stroke="#a2a2a2"/><rect x="2" y="4" width="5" height="1" fill="#000"/></svg>
<svg class="a" style="left:22px;top:267px" width="14" height="13" viewBox="0 0 14 13"><defs><linearGradient id="fg" x1="0" y1="0" x2="0.6" y2="1"><stop offset="0" stop-color="#fdeec4"/><stop offset="1" stop-color="#f5d48c"/></linearGradient></defs><rect x="0.5" y="1.5" width="13" height="11" fill="url(#fg)" stroke="#d7b574"/><rect x="2" y="1" width="5" height="1.8" fill="#6a2410"/></svg>
<div class="t" style="left:42px;top:269px;font-size:11px;letter-spacing:-0.042px">Clientes (tex)</div>
<div class="dh" style="left:34px;top:290px;width:7px"></div>
<svg class="a" style="left:25px;top:286px" width="9" height="9" viewBox="0 0 9 9"><rect x="0.5" y="0.5" width="8" height="8" fill="#fff" stroke="#a2a2a2"/><rect x="2" y="4" width="5" height="1" fill="#000"/><rect x="4" y="2" width="1" height="5" fill="#000"/></svg>
<svg class="a" style="left:42px;top:283px" width="13" height="14" viewBox="0 0 13 14"><path d="M1 1 H8.5 L12 4.5 V13 H1 Z" fill="#d6e5fa" stroke="#3f4f78" stroke-width="1.3" stroke-linejoin="round"/><rect x="3" y="3" width="4" height="9" fill="#b6cdf0"/><path d="M8 1.5 L11.5 5 L8 5 Z" fill="#5d7fb8" stroke="#3f4f78" stroke-width="0.8"/></svg>
<div class="t" style="left:62px;top:285px;font-weight:bold;transform:scaleX(1.0748);transform-origin:0 0">TEX COMERCIAL LTDA - 2207 - 24.155.939/0001-93</div>
<div class="dh" style="left:34px;top:306px;width:7px"></div>
<svg class="a" style="left:25px;top:302px" width="9" height="9" viewBox="0 0 9 9"><rect x="0.5" y="0.5" width="8" height="8" fill="#fff" stroke="#a2a2a2"/><rect x="2" y="4" width="5" height="1" fill="#000"/><rect x="4" y="2" width="1" height="5" fill="#000"/></svg>
<svg class="a" style="left:42px;top:299px" width="13" height="14" viewBox="0 0 13 14"><path d="M1 1 H8.5 L12 4.5 V13 H1 Z" fill="#d6e5fa" stroke="#3f4f78" stroke-width="1.3" stroke-linejoin="round"/><rect x="3" y="3" width="4" height="9" fill="#b6cdf0"/><path d="M8 1.5 L11.5 5 L8 5 Z" fill="#5d7fb8" stroke="#3f4f78" stroke-width="0.8"/></svg>
<div class="t" style="left:62px;top:301px;font-weight:bold;transform:scaleX(1.0392);transform-origin:0 0">TEX COTTON IND.DE CONFEC.LTDA - 3870 - 79.525.242/0001-59</div>
<div class="dh" style="left:34px;top:322px;width:7px"></div>
<svg class="a" style="left:25px;top:318px" width="9" height="9" viewBox="0 0 9 9"><rect x="0.5" y="0.5" width="8" height="8" fill="#fff" stroke="#a2a2a2"/><rect x="2" y="4" width="5" height="1" fill="#000"/><rect x="4" y="2" width="1" height="5" fill="#000"/></svg>
<svg class="a" style="left:42px;top:315px" width="13" height="14" viewBox="0 0 13 14"><path d="M1 1 H8.5 L12 4.5 V13 H1 Z" fill="#d6e5fa" stroke="#3f4f78" stroke-width="1.3" stroke-linejoin="round"/><rect x="3" y="3" width="4" height="9" fill="#b6cdf0"/><path d="M8 1.5 L11.5 5 L8 5 Z" fill="#5d7fb8" stroke="#3f4f78" stroke-width="0.8"/></svg>
<div class="t" style="left:62px;top:317px;font-weight:bold;transform:scaleX(1.0526);transform-origin:0 0">TEX MALHA COM. DE TECIDOS LTDA - 705 - 04.776.216/0001-02</div>
<div class="dh" style="left:34px;top:338px;width:7px"></div>
<svg class="a" style="left:25px;top:334px" width="9" height="9" viewBox="0 0 9 9"><rect x="0.5" y="0.5" width="8" height="8" fill="#fff" stroke="#a2a2a2"/><rect x="2" y="4" width="5" height="1" fill="#000"/><rect x="4" y="2" width="1" height="5" fill="#000"/></svg>
<svg class="a" style="left:42px;top:331px" width="13" height="14" viewBox="0 0 13 14"><path d="M1 1 H8.5 L12 4.5 V13 H1 Z" fill="#d6e5fa" stroke="#3f4f78" stroke-width="1.3" stroke-linejoin="round"/><rect x="3" y="3" width="4" height="9" fill="#b6cdf0"/><path d="M8 1.5 L11.5 5 L8 5 Z" fill="#5d7fb8" stroke="#3f4f78" stroke-width="0.8"/></svg>
<div class="t" style="left:62px;top:333px;font-weight:bold;transform:scaleX(1.0440);transform-origin:0 0">TEX NORTE COM.DE TECIDOS LTDA - 723 - 74.149.493/0001-62</div>
<div class="dh" style="left:34px;top:354px;width:7px"></div>
<svg class="a" style="left:25px;top:350px" width="9" height="9" viewBox="0 0 9 9"><rect x="0.5" y="0.5" width="8" height="8" fill="#fff" stroke="#a2a2a2"/><rect x="2" y="4" width="5" height="1" fill="#000"/><rect x="4" y="2" width="1" height="5" fill="#000"/></svg>
<svg class="a" style="left:42px;top:347px" width="13" height="14" viewBox="0 0 13 14"><path d="M1 1 H8.5 L12 4.5 V13 H1 Z" fill="#d6e5fa" stroke="#3f4f78" stroke-width="1.3" stroke-linejoin="round"/><rect x="3" y="3" width="4" height="9" fill="#b6cdf0"/><path d="M8 1.5 L11.5 5 L8 5 Z" fill="#5d7fb8" stroke="#3f4f78" stroke-width="0.8"/></svg>
<div class="a" style="left:60px;top:346px;width:335px;height:16px;background:#fadf88"></div>
<div class="t" style="left:62px;top:349px;font-weight:bold;transform:scaleX(1.0457);transform-origin:0 0">TEX PRINT CONFE E SERV LTDA - 7175 - 39.456.918/0001-85</div>
<div class="dh" style="left:34px;top:370px;width:7px"></div>
<svg class="a" style="left:25px;top:366px" width="9" height="9" viewBox="0 0 9 9"><rect x="0.5" y="0.5" width="8" height="8" fill="#fff" stroke="#a2a2a2"/><rect x="2" y="4" width="5" height="1" fill="#000"/><rect x="4" y="2" width="1" height="5" fill="#000"/></svg>
<svg class="a" style="left:42px;top:363px" width="13" height="14" viewBox="0 0 13 14"><path d="M1 1 H8.5 L12 4.5 V13 H1 Z" fill="#d6e5fa" stroke="#3f4f78" stroke-width="1.3" stroke-linejoin="round"/><rect x="3" y="3" width="4" height="9" fill="#b6cdf0"/><path d="M8 1.5 L11.5 5 L8 5 Z" fill="#5d7fb8" stroke="#3f4f78" stroke-width="0.8"/></svg>
<div class="t" style="left:62px;top:365px;font-weight:bold;transform:scaleX(1.0658);transform-origin:0 0">TEXARTE TEXTIL LTDA-EPP - 8317 - 00.630.789/0001-64</div>
<div class="dh" style="left:34px;top:386px;width:7px"></div>
<svg class="a" style="left:25px;top:382px" width="9" height="9" viewBox="0 0 9 9"><rect x="0.5" y="0.5" width="8" height="8" fill="#fff" stroke="#a2a2a2"/><rect x="2" y="4" width="5" height="1" fill="#000"/><rect x="4" y="2" width="1" height="5" fill="#000"/></svg>
<svg class="a" style="left:42px;top:379px" width="13" height="14" viewBox="0 0 13 14"><path d="M1 1 H8.5 L12 4.5 V13 H1 Z" fill="#d6e5fa" stroke="#3f4f78" stroke-width="1.3" stroke-linejoin="round"/><rect x="3" y="3" width="4" height="9" fill="#b6cdf0"/><path d="M8 1.5 L11.5 5 L8 5 Z" fill="#5d7fb8" stroke="#3f4f78" stroke-width="0.8"/></svg>
<div class="t" style="left:62px;top:381px;font-weight:bold;transform:scaleX(1.0337);transform-origin:0 0">TEXBLUN CONFEC E COM LTDA - 5915 - 02.237.995/0001-34</div>
<div class="dh" style="left:34px;top:402px;width:7px"></div>
<svg class="a" style="left:25px;top:398px" width="9" height="9" viewBox="0 0 9 9"><rect x="0.5" y="0.5" width="8" height="8" fill="#fff" stroke="#a2a2a2"/><rect x="2" y="4" width="5" height="1" fill="#000"/><rect x="4" y="2" width="1" height="5" fill="#000"/></svg>
<svg class="a" style="left:42px;top:395px" width="13" height="14" viewBox="0 0 13 14"><path d="M1 1 H8.5 L12 4.5 V13 H1 Z" fill="#d6e5fa" stroke="#3f4f78" stroke-width="1.3" stroke-linejoin="round"/><rect x="3" y="3" width="4" height="9" fill="#b6cdf0"/><path d="M8 1.5 L11.5 5 L8 5 Z" fill="#5d7fb8" stroke="#3f4f78" stroke-width="0.8"/></svg>
<div class="t" style="left:62px;top:397px;font-weight:bold;transform:scaleX(1.0795);transform-origin:0 0">TEXIMPER COM IMP. EXP. LTDA - 5449 - 02.129.761/0001-73</div>
<div class="dh" style="left:34px;top:418px;width:7px"></div>
<svg class="a" style="left:25px;top:414px" width="9" height="9" viewBox="0 0 9 9"><rect x="0.5" y="0.5" width="8" height="8" fill="#fff" stroke="#a2a2a2"/><rect x="2" y="4" width="5" height="1" fill="#000"/><rect x="4" y="2" width="1" height="5" fill="#000"/></svg>
<svg class="a" style="left:42px;top:411px" width="13" height="14" viewBox="0 0 13 14"><path d="M1 1 H8.5 L12 4.5 V13 H1 Z" fill="#d6e5fa" stroke="#3f4f78" stroke-width="1.3" stroke-linejoin="round"/><rect x="3" y="3" width="4" height="9" fill="#b6cdf0"/><path d="M8 1.5 L11.5 5 L8 5 Z" fill="#5d7fb8" stroke="#3f4f78" stroke-width="0.8"/></svg>
<div class="t" style="left:62px;top:413px;font-weight:bold;transform:scaleX(1.0408);transform-origin:0 0">TEXLAND COMERCIO DE TECIDOS LT - 2430 - 02.501.362/0001-91</div>
<div class="dh" style="left:34px;top:434px;width:7px"></div>
<svg class="a" style="left:25px;top:430px" width="9" height="9" viewBox="0 0 9 9"><rect x="0.5" y="0.5" width="8" height="8" fill="#fff" stroke="#a2a2a2"/><rect x="2" y="4" width="5" height="1" fill="#000"/><rect x="4" y="2" width="1" height="5" fill="#000"/></svg>
<svg class="a" style="left:42px;top:427px" width="13" height="14" viewBox="0 0 13 14"><path d="M1 1 H8.5 L12 4.5 V13 H1 Z" fill="#d6e5fa" stroke="#3f4f78" stroke-width="1.3" stroke-linejoin="round"/><rect x="3" y="3" width="4" height="9" fill="#b6cdf0"/><path d="M8 1.5 L11.5 5 L8 5 Z" fill="#5d7fb8" stroke="#3f4f78" stroke-width="0.8"/></svg>
<div class="t" style="left:62px;top:429px;font-weight:bold;transform:scaleX(1.0493);transform-origin:0 0">TEXMA IND DE CONFECC LTDA - 2896 - 91.016.717/0001-87</div>
<div class="dh" style="left:34px;top:450px;width:7px"></div>
<svg class="a" style="left:25px;top:446px" width="9" height="9" viewBox="0 0 9 9"><rect x="0.5" y="0.5" width="8" height="8" fill="#fff" stroke="#a2a2a2"/><rect x="2" y="4" width="5" height="1" fill="#000"/><rect x="4" y="2" width="1" height="5" fill="#000"/></svg>
<svg class="a" style="left:42px;top:443px" width="13" height="14" viewBox="0 0 13 14"><path d="M1 1 H8.5 L12 4.5 V13 H1 Z" fill="#d6e5fa" stroke="#3f4f78" stroke-width="1.3" stroke-linejoin="round"/><rect x="3" y="3" width="4" height="9" fill="#b6cdf0"/><path d="M8 1.5 L11.5 5 L8 5 Z" fill="#5d7fb8" stroke="#3f4f78" stroke-width="0.8"/></svg>
<div class="t" style="left:62px;top:445px;font-weight:bold;transform:scaleX(1.0380);transform-origin:0 0">TEXMALHA CONFECCOES LTDA ME - 5078 - 00.246.076/0001-00</div>
<div class="dh" style="left:34px;top:466px;width:7px"></div>
<svg class="a" style="left:25px;top:462px" width="9" height="9" viewBox="0 0 9 9"><rect x="0.5" y="0.5" width="8" height="8" fill="#fff" stroke="#a2a2a2"/><rect x="2" y="4" width="5" height="1" fill="#000"/><rect x="4" y="2" width="1" height="5" fill="#000"/></svg>
<svg class="a" style="left:42px;top:459px" width="13" height="14" viewBox="0 0 13 14"><path d="M1 1 H8.5 L12 4.5 V13 H1 Z" fill="#d6e5fa" stroke="#3f4f78" stroke-width="1.3" stroke-linejoin="round"/><rect x="3" y="3" width="4" height="9" fill="#b6cdf0"/><path d="M8 1.5 L11.5 5 L8 5 Z" fill="#5d7fb8" stroke="#3f4f78" stroke-width="0.8"/></svg>
<div class="t" style="left:62px;top:461px;font-weight:bold;transform:scaleX(1.0318);transform-origin:0 0">TEXMANIA COM DE TECIDOS E CONFEC LTDA - 7441 - 67.292.953/0001-41</div>
<div class="dh" style="left:34px;top:482px;width:7px"></div>
<svg class="a" style="left:25px;top:478px" width="9" height="9" viewBox="0 0 9 9"><rect x="0.5" y="0.5" width="8" height="8" fill="#fff" stroke="#a2a2a2"/><rect x="2" y="4" width="5" height="1" fill="#000"/><rect x="4" y="2" width="1" height="5" fill="#000"/></svg>
<svg class="a" style="left:42px;top:475px" width="13" height="14" viewBox="0 0 13 14"><path d="M1 1 H8.5 L12 4.5 V13 H1 Z" fill="#d6e5fa" stroke="#3f4f78" stroke-width="1.3" stroke-linejoin="round"/><rect x="3" y="3" width="4" height="9" fill="#b6cdf0"/><path d="M8 1.5 L11.5 5 L8 5 Z" fill="#5d7fb8" stroke="#3f4f78" stroke-width="0.8"/></svg>
<div class="t" style="left:62px;top:477px;font-weight:bold;transform:scaleX(1.0487);transform-origin:0 0">TEXSIL CONFEC E SERIGRAFIA LTDA - 1323 - 03.240.368/0001-15</div>
<div class="dh" style="left:34px;top:498px;width:7px"></div>
<svg class="a" style="left:25px;top:494px" width="9" height="9" viewBox="0 0 9 9"><rect x="0.5" y="0.5" width="8" height="8" fill="#fff" stroke="#a2a2a2"/><rect x="2" y="4" width="5" height="1" fill="#000"/><rect x="4" y="2" width="1" height="5" fill="#000"/></svg>
<svg class="a" style="left:42px;top:491px" width="13" height="14" viewBox="0 0 13 14"><path d="M1 1 H8.5 L12 4.5 V13 H1 Z" fill="#d6e5fa" stroke="#3f4f78" stroke-width="1.3" stroke-linejoin="round"/><rect x="3" y="3" width="4" height="9" fill="#b6cdf0"/><path d="M8 1.5 L11.5 5 L8 5 Z" fill="#5d7fb8" stroke="#3f4f78" stroke-width="0.8"/></svg>
<div class="t" style="left:62px;top:493px;font-weight:bold;transform:scaleX(1.0181);transform-origin:0 0">TEXTECI REPRES.E CONFECCOES LT - 983 - 16.618.019/0001-36</div>
<div class="dh" style="left:34px;top:514px;width:7px"></div>
<svg class="a" style="left:25px;top:510px" width="9" height="9" viewBox="0 0 9 9"><rect x="0.5" y="0.5" width="8" height="8" fill="#fff" stroke="#a2a2a2"/><rect x="2" y="4" width="5" height="1" fill="#000"/><rect x="4" y="2" width="1" height="5" fill="#000"/></svg>
<svg class="a" style="left:42px;top:507px" width="13" height="14" viewBox="0 0 13 14"><path d="M1 1 H8.5 L12 4.5 V13 H1 Z" fill="#d6e5fa" stroke="#3f4f78" stroke-width="1.3" stroke-linejoin="round"/><rect x="3" y="3" width="4" height="9" fill="#b6cdf0"/><path d="M8 1.5 L11.5 5 L8 5 Z" fill="#5d7fb8" stroke="#3f4f78" stroke-width="0.8"/></svg>
<div class="t" style="left:62px;top:509px;font-weight:bold;transform:scaleX(1.0680);transform-origin:0 0">TEXTIL BOLOGNA LTDA - 8800 - 07.693.513/0001-74</div>
<div class="dh" style="left:34px;top:530px;width:7px"></div>
<svg class="a" style="left:25px;top:526px" width="9" height="9" viewBox="0 0 9 9"><rect x="0.5" y="0.5" width="8" height="8" fill="#fff" stroke="#a2a2a2"/><rect x="2" y="4" width="5" height="1" fill="#000"/><rect x="4" y="2" width="1" height="5" fill="#000"/></svg>
<svg class="a" style="left:42px;top:523px" width="13" height="14" viewBox="0 0 13 14"><path d="M1 1 H8.5 L12 4.5 V13 H1 Z" fill="#d6e5fa" stroke="#3f4f78" stroke-width="1.3" stroke-linejoin="round"/><rect x="3" y="3" width="4" height="9" fill="#b6cdf0"/><path d="M8 1.5 L11.5 5 L8 5 Z" fill="#5d7fb8" stroke="#3f4f78" stroke-width="0.8"/></svg>
<div class="t" style="left:62px;top:525px;font-weight:bold;transform:scaleX(1.0965);transform-origin:0 0">TEXTIL D M LTDA. - 4534 - 00.232.878/0001-52</div>
<div class="dh" style="left:34px;top:546px;width:7px"></div>
<svg class="a" style="left:25px;top:542px" width="9" height="9" viewBox="0 0 9 9"><rect x="0.5" y="0.5" width="8" height="8" fill="#fff" stroke="#a2a2a2"/><rect x="2" y="4" width="5" height="1" fill="#000"/><rect x="4" y="2" width="1" height="5" fill="#000"/></svg>
<svg class="a" style="left:42px;top:539px" width="13" height="14" viewBox="0 0 13 14"><path d="M1 1 H8.5 L12 4.5 V13 H1 Z" fill="#d6e5fa" stroke="#3f4f78" stroke-width="1.3" stroke-linejoin="round"/><rect x="3" y="3" width="4" height="9" fill="#b6cdf0"/><path d="M8 1.5 L11.5 5 L8 5 Z" fill="#5d7fb8" stroke="#3f4f78" stroke-width="0.8"/></svg>
<div class="t" style="left:62px;top:541px;font-weight:bold;transform:scaleX(1.0775);transform-origin:0 0">TEXTIL EVERS LTDA - 4147 - 81.848.251/0001-22</div>
<div class="dh" style="left:34px;top:562px;width:7px"></div>
<svg class="a" style="left:25px;top:558px" width="9" height="9" viewBox="0 0 9 9"><rect x="0.5" y="0.5" width="8" height="8" fill="#fff" stroke="#a2a2a2"/><rect x="2" y="4" width="5" height="1" fill="#000"/><rect x="4" y="2" width="1" height="5" fill="#000"/></svg>
<svg class="a" style="left:42px;top:555px" width="13" height="14" viewBox="0 0 13 14"><path d="M1 1 H8.5 L12 4.5 V13 H1 Z" fill="#d6e5fa" stroke="#3f4f78" stroke-width="1.3" stroke-linejoin="round"/><rect x="3" y="3" width="4" height="9" fill="#b6cdf0"/><path d="M8 1.5 L11.5 5 L8 5 Z" fill="#5d7fb8" stroke="#3f4f78" stroke-width="0.8"/></svg>
<div class="t" style="left:62px;top:557px;font-weight:bold;transform:scaleX(1.0859);transform-origin:0 0">TEXTIL FENIX LTDA - 6796 - 01.129.164/0001-86</div>
<div class="dh" style="left:34px;top:578px;width:7px"></div>
<svg class="a" style="left:25px;top:574px" width="9" height="9" viewBox="0 0 9 9"><rect x="0.5" y="0.5" width="8" height="8" fill="#fff" stroke="#a2a2a2"/><rect x="2" y="4" width="5" height="1" fill="#000"/><rect x="4" y="2" width="1" height="5" fill="#000"/></svg>
<svg class="a" style="left:42px;top:571px" width="13" height="14" viewBox="0 0 13 14"><path d="M1 1 H8.5 L12 4.5 V13 H1 Z" fill="#d6e5fa" stroke="#3f4f78" stroke-width="1.3" stroke-linejoin="round"/><rect x="3" y="3" width="4" height="9" fill="#b6cdf0"/><path d="M8 1.5 L11.5 5 L8 5 Z" fill="#5d7fb8" stroke="#3f4f78" stroke-width="0.8"/></svg>
<div class="t" style="left:62px;top:573px;font-weight:bold;transform:scaleX(1.0369);transform-origin:0 0">TEXTIL FORCE IND E COM CONFEC - 8411 - 04.371.286/0001-72</div>
<div class="dh" style="left:34px;top:594px;width:7px"></div>
<svg class="a" style="left:25px;top:590px" width="9" height="9" viewBox="0 0 9 9"><rect x="0.5" y="0.5" width="8" height="8" fill="#fff" stroke="#a2a2a2"/><rect x="2" y="4" width="5" height="1" fill="#000"/><rect x="4" y="2" width="1" height="5" fill="#000"/></svg>
<svg class="a" style="left:42px;top:587px" width="13" height="14" viewBox="0 0 13 14"><path d="M1 1 H8.5 L12 4.5 V13 H1 Z" fill="#d6e5fa" stroke="#3f4f78" stroke-width="1.3" stroke-linejoin="round"/><rect x="3" y="3" width="4" height="9" fill="#b6cdf0"/><path d="M8 1.5 L11.5 5 L8 5 Z" fill="#5d7fb8" stroke="#3f4f78" stroke-width="0.8"/></svg>
<div class="t" style="left:62px;top:589px;font-weight:bold;transform:scaleX(1.0923);transform-origin:0 0">TEXTIL H.B.LTDA - 4241 - 85.243.640/0001-85</div>
<div class="dh" style="left:34px;top:610px;width:7px"></div>
<svg class="a" style="left:25px;top:606px" width="9" height="9" viewBox="0 0 9 9"><rect x="0.5" y="0.5" width="8" height="8" fill="#fff" stroke="#a2a2a2"/><rect x="2" y="4" width="5" height="1" fill="#000"/><rect x="4" y="2" width="1" height="5" fill="#000"/></svg>
<svg class="a" style="left:42px;top:603px" width="13" height="14" viewBox="0 0 13 14"><path d="M1 1 H8.5 L12 4.5 V13 H1 Z" fill="#d6e5fa" stroke="#3f4f78" stroke-width="1.3" stroke-linejoin="round"/><rect x="3" y="3" width="4" height="9" fill="#b6cdf0"/><path d="M8 1.5 L11.5 5 L8 5 Z" fill="#5d7fb8" stroke="#3f4f78" stroke-width="0.8"/></svg>
<div class="t" style="left:62px;top:605px;font-weight:bold;transform:scaleX(1.0834);transform-origin:0 0">TEXTIL KARAPIXO LTDA - 3988 - 01.735.939/0001-67</div>
<div class="dh" style="left:34px;top:626px;width:7px"></div>
<svg class="a" style="left:25px;top:622px" width="9" height="9" viewBox="0 0 9 9"><rect x="0.5" y="0.5" width="8" height="8" fill="#fff" stroke="#a2a2a2"/><rect x="2" y="4" width="5" height="1" fill="#000"/><rect x="4" y="2" width="1" height="5" fill="#000"/></svg>
<svg class="a" style="left:42px;top:619px" width="13" height="14" viewBox="0 0 13 14"><path d="M1 1 H8.5 L12 4.5 V13 H1 Z" fill="#d6e5fa" stroke="#3f4f78" stroke-width="1.3" stroke-linejoin="round"/><rect x="3" y="3" width="4" height="9" fill="#b6cdf0"/><path d="M8 1.5 L11.5 5 L8 5 Z" fill="#5d7fb8" stroke="#3f4f78" stroke-width="0.8"/></svg>
<div class="t" style="left:62px;top:621px;font-weight:bold;transform:scaleX(1.0706);transform-origin:0 0">TEXTIL KAWAI IND.E COMERCIO LT - 4752 - 56.658.396/0001-13</div>
<div class="dh" style="left:34px;top:642px;width:7px"></div>
<svg class="a" style="left:25px;top:638px" width="9" height="9" viewBox="0 0 9 9"><rect x="0.5" y="0.5" width="8" height="8" fill="#fff" stroke="#a2a2a2"/><rect x="2" y="4" width="5" height="1" fill="#000"/><rect x="4" y="2" width="1" height="5" fill="#000"/></svg>
<svg class="a" style="left:42px;top:635px" width="13" height="14" viewBox="0 0 13 14"><path d="M1 1 H8.5 L12 4.5 V13 H1 Z" fill="#d6e5fa" stroke="#3f4f78" stroke-width="1.3" stroke-linejoin="round"/><rect x="3" y="3" width="4" height="9" fill="#b6cdf0"/><path d="M8 1.5 L11.5 5 L8 5 Z" fill="#5d7fb8" stroke="#3f4f78" stroke-width="0.8"/></svg>
<div class="t" style="left:62px;top:637px;font-weight:bold;transform:scaleX(1.0720);transform-origin:0 0">TEXTIL METRO PAULO LTDA - 932 - 20.175.113/0004-88</div>
<div class="dh" style="left:34px;top:658px;width:7px"></div>
<svg class="a" style="left:25px;top:654px" width="9" height="9" viewBox="0 0 9 9"><rect x="0.5" y="0.5" width="8" height="8" fill="#fff" stroke="#a2a2a2"/><rect x="2" y="4" width="5" height="1" fill="#000"/><rect x="4" y="2" width="1" height="5" fill="#000"/></svg>
<svg class="a" style="left:42px;top:651px" width="13" height="14" viewBox="0 0 13 14"><path d="M1 1 H8.5 L12 4.5 V13 H1 Z" fill="#d6e5fa" stroke="#3f4f78" stroke-width="1.3" stroke-linejoin="round"/><rect x="3" y="3" width="4" height="9" fill="#b6cdf0"/><path d="M8 1.5 L11.5 5 L8 5 Z" fill="#5d7fb8" stroke="#3f4f78" stroke-width="0.8"/></svg>
<div class="t" style="left:62px;top:653px;font-weight:bold;transform:scaleX(1.0974);transform-origin:0 0">TEXTIL R. V. LTDA - 3731 - 87.158.960/0001-62</div>
<div class="dh" style="left:34px;top:674px;width:7px"></div>
<svg class="a" style="left:25px;top:670px" width="9" height="9" viewBox="0 0 9 9"><rect x="0.5" y="0.5" width="8" height="8" fill="#fff" stroke="#a2a2a2"/><rect x="2" y="4" width="5" height="1" fill="#000"/><rect x="4" y="2" width="1" height="5" fill="#000"/></svg>
<svg class="a" style="left:42px;top:667px" width="13" height="14" viewBox="0 0 13 14"><path d="M1 1 H8.5 L12 4.5 V13 H1 Z" fill="#d6e5fa" stroke="#3f4f78" stroke-width="1.3" stroke-linejoin="round"/><rect x="3" y="3" width="4" height="9" fill="#b6cdf0"/><path d="M8 1.5 L11.5 5 L8 5 Z" fill="#5d7fb8" stroke="#3f4f78" stroke-width="0.8"/></svg>
<div class="t" style="left:62px;top:669px;font-weight:bold;transform:scaleX(1.0688);transform-origin:0 0">TEXTIL SAINT CLIAR IND E COM LTDA - 176410 - 03.749.187/0001-19</div>
<div class="dh" style="left:34px;top:690px;width:7px"></div>
<svg class="a" style="left:25px;top:686px" width="9" height="9" viewBox="0 0 9 9"><rect x="0.5" y="0.5" width="8" height="8" fill="#fff" stroke="#a2a2a2"/><rect x="2" y="4" width="5" height="1" fill="#000"/><rect x="4" y="2" width="1" height="5" fill="#000"/></svg>
<svg class="a" style="left:42px;top:683px" width="13" height="14" viewBox="0 0 13 14"><path d="M1 1 H8.5 L12 4.5 V13 H1 Z" fill="#d6e5fa" stroke="#3f4f78" stroke-width="1.3" stroke-linejoin="round"/><rect x="3" y="3" width="4" height="9" fill="#b6cdf0"/><path d="M8 1.5 L11.5 5 L8 5 Z" fill="#5d7fb8" stroke="#3f4f78" stroke-width="0.8"/></svg>
<div class="t" style="left:62px;top:685px;font-weight:bold;transform:scaleX(1.0902);transform-origin:0 0">TÊXTIL SÃO JOÃO S/A - 178018 - 59.760.553/0001-95</div>
<div class="dh" style="left:34px;top:706px;width:7px"></div>
<svg class="a" style="left:25px;top:702px" width="9" height="9" viewBox="0 0 9 9"><rect x="0.5" y="0.5" width="8" height="8" fill="#fff" stroke="#a2a2a2"/><rect x="2" y="4" width="5" height="1" fill="#000"/><rect x="4" y="2" width="1" height="5" fill="#000"/></svg>
<svg class="a" style="left:42px;top:699px" width="13" height="14" viewBox="0 0 13 14"><path d="M1 1 H8.5 L12 4.5 V13 H1 Z" fill="#d6e5fa" stroke="#3f4f78" stroke-width="1.3" stroke-linejoin="round"/><rect x="3" y="3" width="4" height="9" fill="#b6cdf0"/><path d="M8 1.5 L11.5 5 L8 5 Z" fill="#5d7fb8" stroke="#3f4f78" stroke-width="0.8"/></svg>
<div class="t" style="left:62px;top:701px;font-weight:bold;transform:scaleX(1.0681);transform-origin:0 0">TEXTIL SERRA MONTE LTDA - 2523 - 31.979.412/0001-49</div>
<div class="dh" style="left:34px;top:722px;width:7px"></div>
<svg class="a" style="left:25px;top:718px" width="9" height="9" viewBox="0 0 9 9"><rect x="0.5" y="0.5" width="8" height="8" fill="#fff" stroke="#a2a2a2"/><rect x="2" y="4" width="5" height="1" fill="#000"/><rect x="4" y="2" width="1" height="5" fill="#000"/></svg>
<svg class="a" style="left:42px;top:715px" width="13" height="14" viewBox="0 0 13 14"><path d="M1 1 H8.5 L12 4.5 V13 H1 Z" fill="#d6e5fa" stroke="#3f4f78" stroke-width="1.3" stroke-linejoin="round"/><rect x="3" y="3" width="4" height="9" fill="#b6cdf0"/><path d="M8 1.5 L11.5 5 L8 5 Z" fill="#5d7fb8" stroke="#3f4f78" stroke-width="0.8"/></svg>
<div class="t" style="left:62px;top:717px;font-weight:bold;transform:scaleX(1.0806);transform-origin:0 0">TEXTIL SILVA SANTOS LTDA - 8408 - 53.735.312/0001-00</div>
<div class="dh" style="left:34px;top:738px;width:7px"></div>
<svg class="a" style="left:25px;top:734px" width="9" height="9" viewBox="0 0 9 9"><rect x="0.5" y="0.5" width="8" height="8" fill="#fff" stroke="#a2a2a2"/><rect x="2" y="4" width="5" height="1" fill="#000"/><rect x="4" y="2" width="1" height="5" fill="#000"/></svg>
<svg class="a" style="left:42px;top:731px" width="13" height="14" viewBox="0 0 13 14"><path d="M1 1 H8.5 L12 4.5 V13 H1 Z" fill="#d6e5fa" stroke="#3f4f78" stroke-width="1.3" stroke-linejoin="round"/><rect x="3" y="3" width="4" height="9" fill="#b6cdf0"/><path d="M8 1.5 L11.5 5 L8 5 Z" fill="#5d7fb8" stroke="#3f4f78" stroke-width="0.8"/></svg>
<div class="t" style="left:62px;top:733px;font-weight:bold;transform:scaleX(1.0680);transform-origin:0 0">TEXTIL SUPER MALHAS LTDA - 4831 - 61.170.288/0002-18</div>
<div class="dh" style="left:34px;top:754px;width:7px"></div>
<svg class="a" style="left:25px;top:750px" width="9" height="9" viewBox="0 0 9 9"><rect x="0.5" y="0.5" width="8" height="8" fill="#fff" stroke="#a2a2a2"/><rect x="2" y="4" width="5" height="1" fill="#000"/><rect x="4" y="2" width="1" height="5" fill="#000"/></svg>
<svg class="a" style="left:42px;top:747px" width="13" height="14" viewBox="0 0 13 14"><path d="M1 1 H8.5 L12 4.5 V13 H1 Z" fill="#d6e5fa" stroke="#3f4f78" stroke-width="1.3" stroke-linejoin="round"/><rect x="3" y="3" width="4" height="9" fill="#b6cdf0"/><path d="M8 1.5 L11.5 5 L8 5 Z" fill="#5d7fb8" stroke="#3f4f78" stroke-width="0.8"/></svg>
<div class="t" style="left:62px;top:749px;font-weight:bold;transform:scaleX(1.0768);transform-origin:0 0">TEXTIL VILA GERMANICA LTDA - 8763 - 08.187.509/0001-05</div>
<div class="dh" style="left:34px;top:770px;width:7px"></div>
<svg class="a" style="left:25px;top:766px" width="9" height="9" viewBox="0 0 9 9"><rect x="0.5" y="0.5" width="8" height="8" fill="#fff" stroke="#a2a2a2"/><rect x="2" y="4" width="5" height="1" fill="#000"/><rect x="4" y="2" width="1" height="5" fill="#000"/></svg>
<svg class="a" style="left:42px;top:763px" width="13" height="14" viewBox="0 0 13 14"><path d="M1 1 H8.5 L12 4.5 V13 H1 Z" fill="#d6e5fa" stroke="#3f4f78" stroke-width="1.3" stroke-linejoin="round"/><rect x="3" y="3" width="4" height="9" fill="#b6cdf0"/><path d="M8 1.5 L11.5 5 L8 5 Z" fill="#5d7fb8" stroke="#3f4f78" stroke-width="0.8"/></svg>
<div class="t" style="left:62px;top:765px;font-weight:bold;transform:scaleX(1.0952);transform-origin:0 0">TEXTIL WK LTDA - 7666 - 07.229.900/0001-54</div>
<div class="dh" style="left:34px;top:786px;width:7px"></div>
<svg class="a" style="left:25px;top:782px" width="9" height="9" viewBox="0 0 9 9"><rect x="0.5" y="0.5" width="8" height="8" fill="#fff" stroke="#a2a2a2"/><rect x="2" y="4" width="5" height="1" fill="#000"/><rect x="4" y="2" width="1" height="5" fill="#000"/></svg>
<svg class="a" style="left:42px;top:779px" width="13" height="14" viewBox="0 0 13 14"><path d="M1 1 H8.5 L12 4.5 V13 H1 Z" fill="#d6e5fa" stroke="#3f4f78" stroke-width="1.3" stroke-linejoin="round"/><rect x="3" y="3" width="4" height="9" fill="#b6cdf0"/><path d="M8 1.5 L11.5 5 L8 5 Z" fill="#5d7fb8" stroke="#3f4f78" stroke-width="0.8"/></svg>
<div class="t" style="left:62px;top:781px;font-weight:bold;transform:scaleX(1.0674);transform-origin:0 0">TEXTIL YOOLIM IND.E COM.LTDA - 4645 - 43.708.874/0002-91</div>
<div class="dh" style="left:34px;top:802px;width:7px"></div>
<svg class="a" style="left:25px;top:798px" width="9" height="9" viewBox="0 0 9 9"><rect x="0.5" y="0.5" width="8" height="8" fill="#fff" stroke="#a2a2a2"/><rect x="2" y="4" width="5" height="1" fill="#000"/><rect x="4" y="2" width="1" height="5" fill="#000"/></svg>
<svg class="a" style="left:42px;top:795px" width="13" height="14" viewBox="0 0 13 14"><path d="M1 1 H8.5 L12 4.5 V13 H1 Z" fill="#d6e5fa" stroke="#3f4f78" stroke-width="1.3" stroke-linejoin="round"/><rect x="3" y="3" width="4" height="9" fill="#b6cdf0"/><path d="M8 1.5 L11.5 5 L8 5 Z" fill="#5d7fb8" stroke="#3f4f78" stroke-width="0.8"/></svg>
<div class="t" style="left:62px;top:797px;font-weight:bold;transform:scaleX(1.0409);transform-origin:0 0">TEXTURA CONFECCOES LTDA - 651 - 24.876.278/0001-95</div>
<div class="dh" style="left:34px;top:818px;width:7px"></div>
<svg class="a" style="left:25px;top:814px" width="9" height="9" viewBox="0 0 9 9"><rect x="0.5" y="0.5" width="8" height="8" fill="#fff" stroke="#a2a2a2"/><rect x="2" y="4" width="5" height="1" fill="#000"/><rect x="4" y="2" width="1" height="5" fill="#000"/></svg>
<svg class="a" style="left:42px;top:811px" width="13" height="14" viewBox="0 0 13 14"><path d="M1 1 H8.5 L12 4.5 V13 H1 Z" fill="#d6e5fa" stroke="#3f4f78" stroke-width="1.3" stroke-linejoin="round"/><rect x="3" y="3" width="4" height="9" fill="#b6cdf0"/><path d="M8 1.5 L11.5 5 L8 5 Z" fill="#5d7fb8" stroke="#3f4f78" stroke-width="0.8"/></svg>
<div class="t" style="left:62px;top:813px;font-weight:bold;transform:scaleX(1.0586);transform-origin:0 0">TEXZAN COMERCIAL TEXTIL LTDA - 4625 - 67.297.846/0001-06</div>
<div class="dh" style="left:14px;top:834px;width:7px"></div>
<svg class="a" style="left:5px;top:830px" width="9" height="9" viewBox="0 0 9 9"><rect x="0.5" y="0.5" width="8" height="8" fill="#fff" stroke="#a2a2a2"/><rect x="2" y="4" width="5" height="1" fill="#000"/><rect x="4" y="2" width="1" height="5" fill="#000"/></svg>
<svg class="a" style="left:22px;top:826px" width="14" height="14" viewBox="0 0 14 14"><rect x="0.5" y="1.5" width="11" height="10" fill="#fadfa5" stroke="#d8b474" stroke-width="1"/><rect x="2" y="1" width="4" height="1.6" fill="#6a2810"/><rect x="1.5" y="4.5" width="11" height="7" fill="#fadfa5" stroke="#d8b474" stroke-width="1"/><rect x="3" y="4" width="4" height="1.6" fill="#6a2810"/><rect x="2.5" y="7.5" width="11" height="6" fill="#fadfa5" stroke="#d8b474" stroke-width="1"/><rect x="4" y="7" width="4" height="1.6" fill="#6a2810"/></svg>
<div class="t" style="left:42px;top:829px;font-size:11px;letter-spacing:-0.217px">Contas a pagar</div>
<div class="dh" style="left:14px;top:850px;width:7px"></div>
<svg class="a" style="left:5px;top:846px" width="9" height="9" viewBox="0 0 9 9"><rect x="0.5" y="0.5" width="8" height="8" fill="#fff" stroke="#a2a2a2"/><rect x="2" y="4" width="5" height="1" fill="#000"/><rect x="4" y="2" width="1" height="5" fill="#000"/></svg>
<svg class="a" style="left:22px;top:842px" width="14" height="14" viewBox="0 0 14 14"><rect x="0.5" y="1.5" width="11" height="10" fill="#fadfa5" stroke="#d8b474" stroke-width="1"/><rect x="2" y="1" width="4" height="1.6" fill="#6a2810"/><rect x="1.5" y="4.5" width="11" height="7" fill="#fadfa5" stroke="#d8b474" stroke-width="1"/><rect x="3" y="4" width="4" height="1.6" fill="#6a2810"/><rect x="2.5" y="7.5" width="11" height="6" fill="#fadfa5" stroke="#d8b474" stroke-width="1"/><rect x="4" y="7" width="4" height="1.6" fill="#6a2810"/></svg>
<div class="t" style="left:42px;top:845px;font-size:11px;letter-spacing:-0.179px">Contas a receber</div>
<div class="dh" style="left:14px;top:866px;width:7px"></div>
<svg class="a" style="left:5px;top:862px" width="9" height="9" viewBox="0 0 9 9"><rect x="0.5" y="0.5" width="8" height="8" fill="#fff" stroke="#a2a2a2"/><rect x="2" y="4" width="5" height="1" fill="#000"/><rect x="4" y="2" width="1" height="5" fill="#000"/></svg>
<svg class="a" style="left:22px;top:858px" width="14" height="14" viewBox="0 0 14 14"><rect x="0.5" y="1.5" width="11" height="10" fill="#fadfa5" stroke="#d8b474" stroke-width="1"/><rect x="2" y="1" width="4" height="1.6" fill="#6a2810"/><rect x="1.5" y="4.5" width="11" height="7" fill="#fadfa5" stroke="#d8b474" stroke-width="1"/><rect x="3" y="4" width="4" height="1.6" fill="#6a2810"/><rect x="2.5" y="7.5" width="11" height="6" fill="#fadfa5" stroke="#d8b474" stroke-width="1"/><rect x="4" y="7" width="4" height="1.6" fill="#6a2810"/></svg>
<div class="t" style="left:42px;top:861px;font-size:11px;letter-spacing:-0.201px">Controle de cheques</div>
<div class="dh" style="left:14px;top:882px;width:7px"></div>
<svg class="a" style="left:5px;top:878px" width="9" height="9" viewBox="0 0 9 9"><rect x="0.5" y="0.5" width="8" height="8" fill="#fff" stroke="#a2a2a2"/><rect x="2" y="4" width="5" height="1" fill="#000"/><rect x="4" y="2" width="1" height="5" fill="#000"/></svg>
<svg class="a" style="left:22px;top:875px" width="14" height="13" viewBox="0 0 14 13"><defs><linearGradient id="fg" x1="0" y1="0" x2="0.6" y2="1"><stop offset="0" stop-color="#fdeec4"/><stop offset="1" stop-color="#f5d48c"/></linearGradient></defs><rect x="0.5" y="1.5" width="13" height="11" fill="url(#fg)" stroke="#d7b574"/><rect x="2" y="1" width="5" height="1.8" fill="#6a2410"/></svg>
<div class="t" style="left:42px;top:877px;font-size:11px;letter-spacing:-0.176px">Declarações de quitação anual de débitos</div>
<div class="dh" style="left:14px;top:898px;width:7px"></div>
<svg class="a" style="left:5px;top:894px" width="9" height="9" viewBox="0 0 9 9"><rect x="0.5" y="0.5" width="8" height="8" fill="#fff" stroke="#a2a2a2"/><rect x="2" y="4" width="5" height="1" fill="#000"/><rect x="4" y="2" width="1" height="5" fill="#000"/></svg>
<svg class="a" style="left:22px;top:891px" width="14" height="13" viewBox="0 0 14 13"><defs><linearGradient id="fg" x1="0" y1="0" x2="0.6" y2="1"><stop offset="0" stop-color="#fdeec4"/><stop offset="1" stop-color="#f5d48c"/></linearGradient></defs><rect x="0.5" y="1.5" width="13" height="11" fill="url(#fg)" stroke="#d7b574"/><rect x="2" y="1" width="5" height="1.8" fill="#6a2410"/></svg>
<div class="t" style="left:42px;top:893px;font-size:11px;letter-spacing:-0.270px">Fornecedores</div>
<div class="dh" style="left:14px;top:914px;width:7px"></div>
<svg class="a" style="left:5px;top:910px" width="9" height="9" viewBox="0 0 9 9"><rect x="0.5" y="0.5" width="8" height="8" fill="#fff" stroke="#a2a2a2"/><rect x="2" y="4" width="5" height="1" fill="#000"/><rect x="4" y="2" width="1" height="5" fill="#000"/></svg>
<svg class="a" style="left:22px;top:907px" width="14" height="13" viewBox="0 0 14 13"><defs><linearGradient id="fg" x1="0" y1="0" x2="0.6" y2="1"><stop offset="0" stop-color="#fdeec4"/><stop offset="1" stop-color="#f5d48c"/></linearGradient></defs><rect x="0.5" y="1.5" width="13" height="11" fill="url(#fg)" stroke="#d7b574"/><rect x="2" y="1" width="5" height="1.8" fill="#6a2410"/></svg>
<div class="t" style="left:42px;top:909px;font-size:11px;letter-spacing:-0.171px">Grupo de relatórios</div>
<div class="dh" style="left:14px;top:930px;width:7px"></div>
<svg class="a" style="left:5px;top:926px" width="9" height="9" viewBox="0 0 9 9"><rect x="0.5" y="0.5" width="8" height="8" fill="#fff" stroke="#a2a2a2"/><rect x="2" y="4" width="5" height="1" fill="#000"/><rect x="4" y="2" width="1" height="5" fill="#000"/></svg>
<svg class="a" style="left:22px;top:923px" width="14" height="13" viewBox="0 0 14 13"><defs><linearGradient id="fg" x1="0" y1="0" x2="0.6" y2="1"><stop offset="0" stop-color="#fdeec4"/><stop offset="1" stop-color="#f5d48c"/></linearGradient></defs><rect x="0.5" y="1.5" width="13" height="11" fill="url(#fg)" stroke="#d7b574"/><rect x="2" y="1" width="5" height="1.8" fill="#6a2410"/></svg>
<div class="t" style="left:42px;top:925px;font-size:11px;letter-spacing:-0.167px">Índices financeiros</div>
<div class="a" style="left:763px;top:170px;width:17px;height:770px;background:linear-gradient(90deg,#f3f6fb,#eaf0f8);border-left:1px solid #c0c8d4"></div>
<div class="a" style="left:766px;top:175px;width:0;height:0;border-left:5px solid transparent;border-right:5px solid transparent;border-bottom:5px solid #6a6e74"></div>
<div class="a" style="left:766px;top:929px;width:0;height:0;border-left:5px solid transparent;border-right:5px solid transparent;border-top:5px solid #6a6e74"></div>
<div class="a" style="left:765px;top:187px;width:13px;height:666px;border:1px solid #a9b2c4;border-radius:2px;background:linear-gradient(90deg,#fff 0%,#fdfdff 45%,#d6def8 75%,#eef4fd 100%)"></div>
<div class="a" style="left:780px;top:147px;width:500px;height:794px;background:#d2e1f7"></div>
<div class="a" style="left:780px;top:170px;width:1px;height:771px;background:#aab8ca"></div>
<div class="a" style="left:785px;top:233px;width:494px;height:707px;background:#d5e3fb;border:1px solid #9db3d2"></div>
<div class="a" style="left:1275px;top:234px;width:3px;height:705px;background:#dae8fb"></div>
<div class="t" style="left:785px;top:154px;font-weight:bold;font-size:12px;color:#2a4067;letter-spacing:-0.261px">TEX PRINT CONFE E SERV LTDA - 7175 - 39.456.918/0001-85</div>
<svg class="a" style="left:1164px;top:151px" width="17" height="17"><path d="M8.5 2 V15 M2 8.5 H15" stroke="#5c6068" stroke-width="5" stroke-linecap="round"/><path d="M8.5 2 V15 M2 8.5 H15" stroke="#a4a8b0" stroke-width="2.6" stroke-linecap="round"/></svg>
<svg class="a" style="left:1188px;top:155px" width="16" height="8"><path d="M2 4 H14" stroke="#5c6068" stroke-width="5" stroke-linecap="round"/><path d="M2 4 H14" stroke="#a4a8b0" stroke-width="2.4" stroke-linecap="round"/></svg>
<svg class="a" style="left:1212px;top:153px" width="17" height="12"><path d="M8.5 1.5 L15.5 10.5 H1.5 Z" fill="#a8acb2" stroke="#62666c" stroke-width="1.2" stroke-linejoin="round"/></svg>
<svg class="a" style="left:1235px;top:150px" width="17" height="18"><path d="M2.5 9.5 L7 15 L14.5 2.5" fill="none" stroke="#1a8a1a" stroke-width="4" stroke-linecap="round" stroke-linejoin="round"/><path d="M2.5 9.5 L7 15 L14.5 2.5" fill="none" stroke="#4cd040" stroke-width="2" stroke-linecap="round" stroke-linejoin="round"/></svg>
<svg class="a" style="left:1259px;top:150px" width="17" height="18"><path d="M2.5 2.5 L14.5 15.5 M14.5 2.5 L2.5 15.5" stroke="#b01010" stroke-width="4.4" stroke-linecap="round"/><path d="M2.5 2.5 L14.5 15.5 M14.5 2.5 L2.5 15.5" stroke="#f04040" stroke-width="2.2" stroke-linecap="round"/></svg>
<div class="a" style="left:785px;top:173px;width:494px;height:22px;border:1px solid #b9cbe3;border-radius:3px;background:linear-gradient(#e4ecf8 0%,#d8e4f5 50%,#cddcf1 51%,#d3e1f4 100%)"></div>
<div class="t" style="left:791px;top:180px;font-size:11px;color:#2b4570;transform:scaleX(0.85);transform-origin:0 0;letter-spacing:-0.3px">SPED</div>
<div class="a" style="left:791px;top:190px;width:6px;height:1px;background:#2b4570"></div>
<div class="t" style="left:829px;top:180px;font-size:11px;color:#aebdd0;text-shadow:1px 1px 0 #fff;letter-spacing:-0.681px">Copiar</div>
<div class="tab" style="left:788px;top:198px;width:61px"></div>
<div class="t" style="left:796.2px;top:203px">Cadastro</div>
<div class="tab" style="left:851px;top:198px;width:46px"></div>
<div class="t" style="left:863.5px;top:203px">Tipo</div>
<div class="tab" style="left:900px;top:198px;width:76px"></div>
<div class="t" style="left:907.7px;top:203px">Informações</div>
<div class="tab" style="left:979px;top:198px;width:63px"></div>
<div class="t" style="left:987.0px;top:203px">Telefones</div>
<div class="tab" style="left:1044px;top:198px;width:49px"></div>
<div class="t" style="left:1050.8px;top:203px">Benner</div>
<div class="tab" style="left:1096px;top:198px;width:48px"></div>
<div class="t" style="left:1102.9px;top:203px">Cliente</div>
<div class="tab" style="left:1147px;top:198px;width:70px"></div>
<div class="t" style="left:1153.9px;top:203px">Fornecedor</div>
<div class="tab" style="left:1220px;top:198px;width:56px"></div>
<div class="t" style="left:1227.2px;top:203px">Cedente</div>
<div class="tab" style="left:788px;top:216px;width:94px;height:18px"></div>
<div class="t" style="left:793.1px;top:221px">Metas de vendas</div>
<div class="tab" style="left:884px;top:216px;width:82px;height:18px"></div>
<div class="t" style="left:890.7px;top:221px">Transportador</div>
<div class="tab" style="left:968px;top:216px;width:68px;height:18px"></div>
<div class="t" style="left:973.3px;top:221px">Funcionário</div>
<div class="tab" style="left:1039px;top:216px;width:91px;height:18px"></div>
<div class="t" style="left:1044.3px;top:221px">Transportadores</div>
<div class="tab" style="left:1132px;top:216px;width:54px;height:18px"></div>
<div class="t" style="left:1137.3px;top:221px">Auditoria</div>
<div class="a" style="left:1188px;top:214px;width:90px;height:21px;border:1px solid #eecb84;border-radius:3px 3px 0 0;background:linear-gradient(#fff3cc 0%,#fde6a8 40%,#fcd888 75%,#fde7a0 100%);box-shadow:inset 3px 0 4px -2px rgba(240,160,60,.45),inset -3px 0 4px -2px rgba(240,160,60,.45)"></div>
<div class="t" style="left:1195.5px;top:219px;font-size:11px;letter-spacing:-0.243px">Integração SGT</div>
<div class="a" style="left:788px;top:236px;width:149px;height:53px;border:5px solid #ff0000"></div>
<div class="lbl" style="left:797px;top:247px;font-size:11px;color:#2b4570;letter-spacing:-0.344px">Tabela Base Redução ICMS:</div>
<div class="a" style="left:797.0px;top:257px;width:6.7px;height:1px;background:#2b4570"></div>
<div class="inp" style="left:797px;top:259px;width:107px;height:21px"></div>
<div class="btn" style="left:874px;top:261px;width:14px;height:17px"></div>
<div class="a" style="left:876.5px;top:267.5px;width:0;height:0;border-left:4.5px solid transparent;border-right:4.5px solid transparent;border-top:4.5px solid #44557c"></div>
<div class="btn" style="left:889px;top:261px;width:14px;height:17px"></div>
<svg class="a" style="left:891.5px;top:265.0px" width="9" height="9"><path d="M1.5 1.5 L7.5 7.5 M7.5 1.5 L1.5 7.5" stroke="#2e64b8" stroke-width="2.2"/></svg>
<div class="lbl" style="left:941px;top:247px;font-size:11px;color:#2b4570;letter-spacing:-0.028px">Codtransportadora:</div>
<div class="a" style="left:964.1px;top:257px;width:3.7px;height:1px;background:#2b4570"></div>
<div class="inp" style="left:941px;top:260px;width:42px;height:20px"></div>
<div class="lbl" style="left:1036px;top:247px;font-size:11px;color:#2b4570;letter-spacing:-0.052px">Codrepresentante:</div>
<div class="a" style="left:1065.7px;top:257px;width:6.1px;height:1px;background:#2b4570"></div>
<div class="inp" style="left:1037px;top:260px;width:41px;height:20px"></div>
<div class="lbl" style="left:1128px;top:247px;font-size:11px;color:#2b4570;letter-spacing:-0.118px">Codfornecedor:</div>
<div class="a" style="left:1160.3px;top:257px;width:6.1px;height:1px;background:#2b4570"></div>
<div class="inp" style="left:1128px;top:260px;width:42px;height:20px"></div>
<div class="lbl" style="left:1206px;top:247px;font-size:11px;color:#2b4570;letter-spacing:-0.265px">Codcliente:</div>
<div class="inp" style="left:1207px;top:260px;width:41px;height:20px"></div>
<div class="t" style="left:1209.5px;top:265px;font-size:11px">197115</div>
<div class="lbl" style="left:797px;top:288px;font-size:11px;color:#2b4570;letter-spacing:-0.063px">Idantigo:</div>
<div class="a" style="left:797.0px;top:298px;width:3.1px;height:1px;background:#2b4570"></div>
<div class="inp" style="left:797px;top:299px;width:42px;height:20px"></div>
<div class="t" style="left:799.5px;top:304px;font-size:11px">7175</div>
<div class="a" style="left:797px;top:332px;width:473px;height:31px;border:1px solid #b8c6da;border-radius:3px"></div>
<div class="a" style="left:803px;top:326px;width:127px;height:10px;background:#d5e3fb"></div>
<div class="lbl" style="left:807px;top:328px;font-size:11px;color:#2b4570;letter-spacing:-0.161px">Tipos Incentivos Suframa</div>
<div class="cb" style="left:805px;top:342px"></div>
<div class="lbl" style="left:822px;top:343px;font-size:11px;color:#2b4570;letter-spacing:-1.120px">PIS?</div>
<div class="a" style="left:822.0px;top:353px;width:7.3px;height:1px;background:#2b4570"></div>
<div class="cb" style="left:857px;top:342px"></div>
<div class="lbl" style="left:874px;top:343px;font-size:11px;color:#2b4570;letter-spacing:-0.948px">COFINS?</div>
<div class="a" style="left:888.6px;top:353px;width:6.7px;height:1px;background:#2b4570"></div>
<div class="cb" style="left:931px;top:342px"></div>
<div class="lbl" style="left:948px;top:343px;font-size:11px;color:#2b4570;letter-spacing:-1.031px">ICMS?</div>
<div class="a" style="left:956.9px;top:353px;width:9.2px;height:1px;background:#2b4570"></div>
<div class="cb" style="left:992px;top:342px"></div>
<div class="lbl" style="left:1009px;top:343px;font-size:11px;color:#2b4570;letter-spacing:-0.359px">IPI?</div>
<div class="lbl" style="left:797px;top:370px;font-size:11px;color:#2b4570;letter-spacing:-0.175px">Canais de venda:</div>
<div class="a" style="left:833.1px;top:380px;width:6.1px;height:1px;background:#2b4570"></div>
<div class="inp" style="left:797px;top:383px;width:235px;height:20px"></div>
<div class="btn" style="left:1001px;top:384px;width:14px;height:17px"></div>
<div class="a" style="left:1003.5px;top:390.5px;width:0;height:0;border-left:4.5px solid transparent;border-right:4.5px solid transparent;border-top:4.5px solid #44557c"></div>
<div class="btn" style="left:1016px;top:384px;width:15px;height:17px"></div>
<svg class="a" style="left:1019.0px;top:388.0px" width="9" height="9"><path d="M1.5 1.5 L7.5 7.5 M7.5 1.5 L1.5 7.5" stroke="#2e64b8" stroke-width="2.2"/></svg>
<div class="lbl" style="left:1037px;top:370px;font-size:11px;color:#2b4570;letter-spacing:-0.214px">Tipo de cliente:</div>
<div class="inp" style="left:1037px;top:383px;width:234px;height:20px"></div>
<div class="t" style="left:1039.5px;top:388px;font-size:11px">MEDIO</div>
<div class="btn" style="left:1256px;top:385px;width:14px;height:16px"></div>
<div class="a" style="left:1258.5px;top:391.0px;width:0;height:0;border-left:4.5px solid transparent;border-right:4.5px solid transparent;border-top:4.5px solid #44557c"></div>
<div class="lbl" style="left:797px;top:410px;font-size:11px;color:#2b4570;letter-spacing:-0.215px">Percentual Desconto Suframa:</div>
<div class="a" style="left:839.3px;top:420px;width:6.1px;height:1px;background:#2b4570"></div>
<div class="inp" style="left:797px;top:422px;width:32px;height:21px"></div>
<div class="lbl" style="left:946px;top:410px;font-size:11px;color:#2b4570;letter-spacing:-0.185px">Dia de pagamento:</div>
<div class="a" style="left:956.0px;top:420px;width:6.1px;height:1px;background:#2b4570"></div>
<div class="inp" style="left:947px;top:422px;width:74px;height:21px"></div>
<div class="cb" style="left:1042px;top:425px"></div>
<div class="lbl" style="left:1058.5px;top:426px;font-size:11px;color:#2b4570;letter-spacing:-0.244px">Cliente especial</div>
<div class="a" style="left:1066.2px;top:436px;width:2.5px;height:1px;background:#2b4570"></div>
<div class="lbl" style="left:797px;top:450px;font-size:11px;color:#2b4570;letter-spacing:-0.441px">Moeda:</div>
<div class="inp" style="left:797px;top:462px;width:193px;height:21px"></div>
<div class="btn" style="left:959px;top:464px;width:14px;height:8px;border-radius:4px"></div>
<div class="a" style="left:962px;top:467px;width:8px;height:2px;background-image:linear-gradient(90deg,#3a4a6a 50%,transparent 50%);background-size:3px 2px"></div>
<div class="btn" style="left:959px;top:473px;width:14px;height:8px;border-radius:4px"></div>
<div class="a" style="left:962px;top:475px;width:0;height:0;border-left:4px solid transparent;border-right:4px solid transparent;border-top:4px solid #536a90"></div>
<div class="btn" style="left:974px;top:464px;width:15px;height:17px"></div>
<svg class="a" style="left:977.0px;top:468.0px" width="9" height="9"><path d="M1.5 1.5 L7.5 7.5 M7.5 1.5 L1.5 7.5" stroke="#2e64b8" stroke-width="2.2"/></svg>
<div class="a" style="left:0;top:941px;width:1280px;height:18px;background:linear-gradient(#d9e7f9 0%,#d2e3f8 40%,#c4daf5 60%,#bdd6f3 100%);border-top:1px solid #9fb5d5"></div>
<div class="a" style="left:1135px;top:942px;width:145px;height:17px;background:linear-gradient(#dfeafa,#cfe0f6)"></div>
<div class="a" style="left:1064px;top:942px;width:1px;height:17px;background:#a9bcd6"></div>
<div class="a" style="left:1065px;top:942px;width:1px;height:17px;background:#eef4fc"></div>
<div class="a" style="left:1134px;top:942px;width:1px;height:17px;background:#a9bcd6"></div>
<div class="t" style="left:1142px;top:946px;font-size:11px;color:#243e66;letter-spacing:0.177px">seq, 07/11/2011-14:40</div>
<svg class="a" style="left:1262px;top:942px" width="17" height="17"><circle cx="8.5" cy="8.5" r="7.5" fill="#7a8a2a" stroke="#5a6a1a"/><circle cx="8.5" cy="8.5" r="5.3" fill="#fff"/><path d="M8.5 5 V8.5 L6 9.5" stroke="#4a5a1a" stroke-width="1.2" fill="none"/></svg>
<svg class="a" style="left:2px;top:942px" width="17" height="17"><path d="M10 10 L15 15" stroke="#5a9a40" stroke-width="3" stroke-linecap="round"/><circle cx="7" cy="7" r="5.5" fill="#eef2f6" stroke="#8c96a2" stroke-width="1.4"/></svg>
</body></html>
